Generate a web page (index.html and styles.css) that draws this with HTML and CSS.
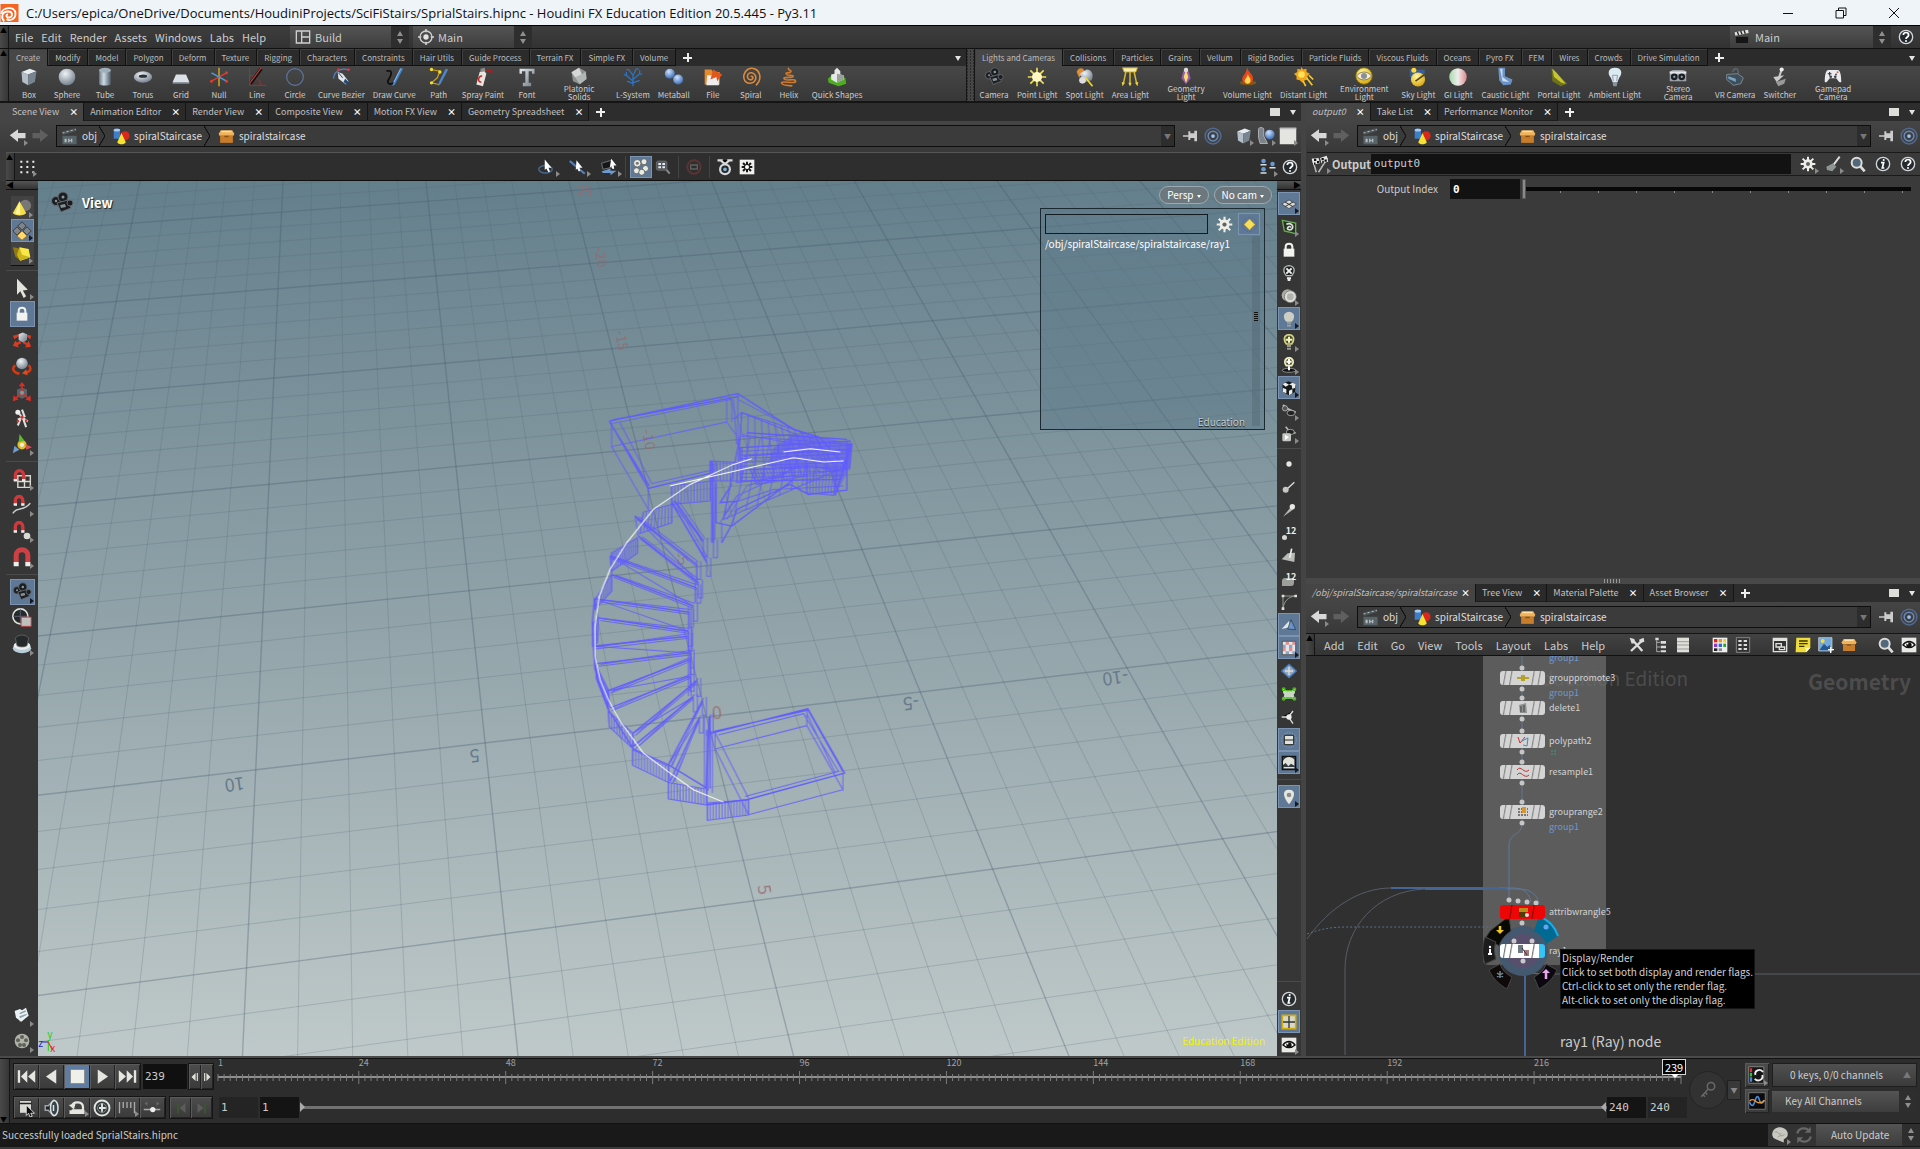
FILE: index.html
```html
<!DOCTYPE html>
<html lang="en">
<head>
    <meta charset="UTF-8">
    <meta name="viewport" content="width=device-width, initial-scale=1.0">
    <title>SprialStairs.hipnc - Houdini FX Education Edition 20.5.445</title>
    <link rel="stylesheet" href="styles.css">
</head>
<body>
    <!-- icon sprite -->
    <svg class="sprite" aria-hidden="true">
        <defs>
            <linearGradient id="steel" x1="0" y1="0" x2="1" y2="1"><stop offset="0" stop-color="#e4eaf0"/><stop offset="1" stop-color="#6d7883"/></linearGradient>
            <linearGradient id="tube" x1="0" y1="0" x2="1" y2="0"><stop offset="0" stop-color="#6f7f8d"/><stop offset=".4" stop-color="#cfdbe4"/><stop offset="1" stop-color="#4d5a66"/></linearGradient>
            <radialGradient id="ball" cx=".4" cy=".3" r=".7"><stop offset="0" stop-color="#eef3f8"/><stop offset="1" stop-color="#77828e"/></radialGradient>
            <radialGradient id="blue" cx=".4" cy=".3" r=".7"><stop offset="0" stop-color="#cfe2ff"/><stop offset="1" stop-color="#3b6db5"/></radialGradient>
            <radialGradient id="gold" cx=".4" cy=".3" r=".7"><stop offset="0" stop-color="#fff9a8"/><stop offset="1" stop-color="#d9a90c"/></radialGradient>
            <linearGradient id="gi" x1="0" y1="0" x2="1" y2="0"><stop offset="0" stop-color="#a8d8a8"/><stop offset=".5" stop-color="#eee"/><stop offset="1" stop-color="#d88"/></linearGradient>
        </defs>
        <symbol id="i-box" viewBox="0 0 24 24"><path fill="#e8edf2" d="M3 6l10-4 8 3-10 4z"/><path fill="#b4bec8" d="M3 6l8 3v13l-7-4z"/><path fill="#78848f" d="M11 9l10-4-2 13-8 4z"/></symbol>
        <symbol id="i-sphere" viewBox="0 0 24 24"><circle cx="12" cy="12" r="10" fill="url(#ball)"/></symbol>
        <symbol id="i-tube" viewBox="0 0 24 24"><path fill="url(#tube)" d="M5 4v16c0 3 14 3 14 0V4z"/><ellipse cx="12" cy="4" rx="7" ry="3" fill="#9fb0bd"/></symbol>
        <symbol id="i-torus" viewBox="0 0 24 24"><ellipse cx="12" cy="12" rx="11" ry="7" fill="url(#ball)"/><ellipse cx="12" cy="11" rx="5" ry="2" fill="#2b3036"/></symbol>
        <symbol id="i-grid" viewBox="0 0 24 24"><path fill="#dbe1e7" d="M6 9h12l4 9H2z"/><path fill="#8d98a3" d="M2 18h20v2H2z"/></symbol>
        <symbol id="i-null" viewBox="0 0 24 24"><path stroke="#e0b21c" stroke-width="1.6" d="M12 1v22"/><path stroke="#e8382a" stroke-width="1.6" d="M3 17L21 7"/><path stroke="#49a0e8" stroke-width="1.6" d="M3 7l18 10"/><circle cx="3" cy="17" r="1.8" fill="#e8382a"/><circle cx="21" cy="7" r="1.8" fill="#e8382a"/><circle cx="21" cy="17" r="1.8" fill="#e8382a"/></symbol>
        <symbol id="i-line" viewBox="0 0 24 24"><path stroke="#a83230" fill="none" d="M3 1v21h20M3 10c6 0 13 5 14 12"/><path stroke="#111" stroke-width="4" d="M4 20L17 2"/><path stroke="#c03a34" stroke-width="1.4" d="M3 20L17 1"/></symbol>
        <symbol id="i-circle" viewBox="0 0 24 24"><circle cx="12" cy="12" r="10" fill="none" stroke="#5d76a4" stroke-width="1.4"/></symbol>
        <symbol id="i-bezier" viewBox="0 0 24 24"><path fill="none" stroke="#4f80c8" stroke-width="1.5" d="M3 14C4 2 16 1 22 4"/><path fill="#dfe6ee" d="M8 6l6 2 7 9-3 4-9-7z"/><path fill="#26496f" d="M17 14l5 5-2 3-5-4z"/><circle cx="9" cy="3" r="1.6" fill="#e33"/><circle cx="21" cy="3" r="1.6" fill="#e33"/><path stroke="#222" d="M9 7l5 6"/></symbol>
        <symbol id="i-draw" viewBox="0 0 24 24"><path fill="none" stroke="#0c0c0c" stroke-width="2" d="M3 5c10-3 4 8 2 11s2 6 6 3"/><path fill="#3f83cc" d="M20 1l3 1-10 19-3 2 1-4z"/><path stroke="#a9cdf0" d="M20 2l-8 16"/></symbol>
        <symbol id="i-path" viewBox="0 0 24 24"><path fill="none" stroke="#c8a019" stroke-width="1.5" d="M2 3l11 2-3 8-7 6 9 2"/><path fill="#4b88cb" d="M20 2l3 1-9 17-3 3 1-5z"/><g fill="#f5dc2c"><circle cx="3" cy="3" r="2"/><circle cx="13" cy="6" r="2"/><circle cx="3" cy="19" r="2"/></g></symbol>
        <symbol id="i-spray" viewBox="0 0 24 24"><path fill="#e8e4e0" d="M8 6l5-2 3 4-4 15-8-2z"/><path fill="#8b8b8b" d="M9 2l5-1 1 4-6 1z"/><path fill="none" stroke="#c22" stroke-width="1.8" d="M11 11c-5-1-6 8-1 7"/><path fill="#a3211e" d="M15 4l8-2v6z"/></symbol>
        <symbol id="i-font" viewBox="0 0 24 24"><path fill="url(#steel)" d="M3 2h18v6h-3V5h-4v14h3v4H7v-4h3V5H6v3H3z"/></symbol>
        <symbol id="i-platonic" viewBox="0 0 24 24"><path fill="#8d9190" d="M12 1l9 5 1 10-9 7-9-4L2 7z"/><path fill="#d4d7d6" d="M12 1l4 9-9 4-5-7z"/><path fill="#b2b6b5" d="M16 10l5-4 1 10-9 7-6-9z"/></symbol>
        <symbol id="i-lsystem" viewBox="0 0 24 24"><path fill="none" stroke="#2f74bd" stroke-width="1.5" d="M12 23V9M12 17L4 10M12 15l8-7M12 10L7 3M12 10l4-8M4 10L1 9M4 10V6M20 8l3 1M20 8V4M12 20l-7-3M12 19l8-3M7 3L4 3M16 2l3 1"/></symbol>
        <symbol id="i-metaball" viewBox="0 0 24 24"><circle cx="7" cy="8" r="6" fill="url(#blue)"/><circle cx="17" cy="15" r="6" fill="url(#blue)"/></symbol>
        <symbol id="i-objmix" viewBox="0 0 24 24"><path fill="#7d8489" stroke="#c2c6c8" d="M2 3c0-3 7-3 7 0v9l5 10H4L2 14z"/><circle cx="17" cy="10" r="6.500" fill="url(#blue)"/></symbol>
        <symbol id="i-file" viewBox="0 0 24 24"><path fill="#e78a2c" d="M2 3h8l2 3h8v15H2z"/><path fill="#eee" d="M5 10h14v12H4z"/><path fill="#e0561c" d="M12 3l11 6-6 8-1-5-7 3z"/></symbol>
        <symbol id="i-spiral" viewBox="0 0 24 24"><path fill="none" stroke="#d98a3a" stroke-width="1.9" d="M12 12c1-2 3 0 2 2s-5 2-6-1 1-7 5-6 6 5 4 9-9 5-12 1-2-11 3-14 12-1 14 5-1 11-4 14"/></symbol>
        <symbol id="i-helix" viewBox="0 0 24 24"><path fill="none" stroke="#cf7a2c" stroke-width="2" d="M12 1c-3 3 4 2 2 5-3 2-7 0-5 3 2 2 8 0 8 2 0 3-12 0-11 3 1 4 14-1 14 3 0 4-17-1-17 2 1 4 12 3 13 4"/></symbol>
        <symbol id="i-quick" viewBox="0 0 24 24"><path fill="#4fae1f" d="M1 14l5-4 16 3 1 7-9 3-12-4z"/><path fill="#e5e8e6" d="M12 1l4 4v4l4 1v5l-8 4-7-4V9l4-1V4z"/><path fill="#999f9b" d="M12 8l8 2v5l-8 4z"/></symbol>
        <symbol id="i-camera" viewBox="0 0 24 24"><g fill="#1b1e21" stroke="#666c72"><circle cx="6" cy="10" r="4.500"/><circle cx="13" cy="6" r="5"/><path d="M7 12l11-3 3 8-10 4z"/><circle cx="20" cy="12" r="3"/></g><circle cx="13" cy="6" r="1.500" fill="#8f979e"/><circle cx="6" cy="10" r="1.200" fill="#8f979e"/><path fill="#878e94" d="M10 14l5-1 1 3-5 1z"/></symbol>
        <symbol id="i-point" viewBox="0 0 24 24"><path stroke="#eedb50" stroke-width="2" d="M12 1v22M1 12h22M4 4l16 16M20 4L4 20"/><circle cx="12" cy="12" r="6" fill="#fff8c4"/></symbol>
        <symbol id="i-spot" viewBox="0 0 24 24"><path fill="#e38a2c" d="M2 6c1-6 9-6 9-1l-6 8z"/><path fill="url(#ball)" d="M5 8l9-5c6 0 9 6 6 13l-8 2z"/><circle cx="9" cy="16" r="4" fill="#ddd"/><path stroke="#f0d829" stroke-width="2" d="M12 12l9 11"/></symbol>
        <symbol id="i-area" viewBox="0 0 24 24"><path fill="#f6edb0" stroke="#c9a51b" d="M3 1h18l-2 5H5z"/><path stroke="#d9b92a" stroke-width="1.800" d="M7 6L4 20M12 6v16M17 6l3 14"/><path fill="#ead23b" d="M2 18l4 1-3 4zM10 19h4l-2 4zM18 19l4-1-1 5z"/></symbol>
        <symbol id="i-geolight" viewBox="0 0 24 24"><path fill="#9b5bb0" d="M12 0l4 7 2 8-6 8-6-8 2-8z"/><path fill="#f5df66" d="M12 4l3 9-3 8-3-8z"/><circle cx="12" cy="4" r="3" fill="#ddd"/></symbol>
        <symbol id="i-volume" viewBox="0 0 24 24"><ellipse cx="12" cy="19" rx="10" ry="3" fill="#7a5a1b"/><path fill="#e8481a" d="M11 0c0 6 8 8 7 15-1 7-12 7-13 0C5 10 10 9 11 0z"/><path fill="#ffd84c" d="M12 8c0 4 4 5 3 9-1 4-6 4-7 0 0-3 3-4 4-9z"/></symbol>
        <symbol id="i-distant" viewBox="0 0 24 24"><path fill="#f0a61c" d="M9 0l2 3 4-1v4l4 2-3 3 1 4-4 1-3 3-3-3-4-1V11L0 8l4-2V2l4 1z"/><circle cx="9" cy="9" r="4" fill="#ffe157"/><path stroke="#f4c92a" stroke-width="2" d="M15 13l7 9M11 17l3 6M18 10l5 5"/></symbol>
        <symbol id="i-env" viewBox="0 0 24 24"><circle cx="12" cy="12" r="11" fill="url(#gold)" stroke="#877000"/><path fill="#f3eedc" stroke="#6d6228" d="M2 12c5-7 15-7 20 0-5 7-15 7-20 0z"/><circle cx="12" cy="12" r="4" fill="#8a8f93"/></symbol>
        <symbol id="i-sky" viewBox="0 0 24 24"><path fill="#3a5f94" d="M2 3h18v9H2z"/><circle cx="12" cy="15" r="8.500" fill="url(#gold)"/><circle cx="7" cy="4" r="3" fill="#ffd93b"/><path stroke="#60480a" stroke-width="2" d="M9 17l11-8"/></symbol>
        <symbol id="i-gi" viewBox="0 0 24 24"><circle cx="12" cy="12" r="10.500" fill="url(#gi)"/></symbol>
        <symbol id="i-caustic" viewBox="0 0 24 24"><path fill="#6a93c9" d="M4 1h8v10l9 4-2 6-9 1-5-6z"/><path fill="#cbdcf0" d="M6 2h3v10l8 6-8-1z"/></symbol>
        <symbol id="i-portal" viewBox="0 0 24 24"><path fill="#6e721c" d="M3 1l6 6 13 13-8 3L4 17z"/><path fill="#c7c531" d="M4 2l5 5 11 13-5-1L6 12z"/></symbol>
        <symbol id="i-ambient" viewBox="0 0 24 24"><path fill="#dbeaf0" d="M12 1c9 0 9 8 5 12l-2 5H9l-2-5C3 9 3 1 12 1z"/><path fill="#86949b" d="M9 18h6l-1 5h-4z"/><path fill="none" stroke="#88a" d="M10 17l-1-7h6l-1 7"/></symbol>
        <symbol id="i-stereo" viewBox="0 0 24 24"><path fill="#9da2a8" d="M1 6l4-2h14l4 2v13H1z"/><path fill="#e4e7ea" d="M1 6h22v3H1z"/><circle cx="7" cy="13" r="4.500" fill="#1b1e22"/><circle cx="17" cy="13" r="4.500" fill="#1b1e22"/><circle cx="7" cy="13" r="1.500" fill="#8ab"/><circle cx="17" cy="13" r="1.500" fill="#8ab"/></symbol>
        <symbol id="i-vr" viewBox="0 0 24 24"><path fill="none" stroke="#59636b" stroke-width="2" d="M9 6c3-6 7-5 7 2"/><path fill="#3e4f5c" stroke="#86939d" d="M2 9l13-1 7 5-3 7-9 2-8-7z"/><path fill="#7ba3bd" d="M4 11l9 3v4l-9-4z"/></symbol>
        <symbol id="i-switcher" viewBox="0 0 24 24"><path stroke="#c9c9c9" stroke-width="2.500" d="M14 3l-4 12"/><circle cx="14" cy="3" r="2.500" fill="#eee"/><path fill="#cbcbcb" d="M4 12l13-2-9 8z"/><path fill="#999" d="M7 18l12-4-2 6-7 3z"/></symbol>
        <symbol id="i-gamepad" viewBox="0 0 24 24"><path fill="#e9ebee" d="M6 4h12c4 0 5 8 5 16-3 2-5-4-7-5H8c-2 1-4 7-7 5C1 12 2 4 6 4z"/><path stroke="#333" stroke-width="1.500" d="M5 9h5M7.500 6.500v5"/><circle cx="18" cy="7" r="1.300" fill="#d64"/><circle cx="16" cy="10" r="1.300" fill="#456"/><circle cx="9" cy="13" r="1.800" fill="#444"/><circle cx="15" cy="13" r="1.800" fill="#444"/></symbol>

        <symbol id="i-houdini" viewBox="0 0 24 24"><path fill="#f26722" d="M0 0h24v24H0z"/><path fill="none" stroke="#fff" stroke-width="2.400" d="M1 13C2 4 20 2 20 13c0 8-9 10-12 7M5 23c-5-5-3-13 5-13 7 0 7 8 1 8-4 0-4-4-1-4"/></symbol>
        <symbol id="i-layout" viewBox="0 0 24 24"><path fill="none" stroke="#cfcfcf" stroke-width="2" d="M2 3h20v18H2zM10 3v18M10 12h12"/></symbol>
        <symbol id="i-radial" viewBox="0 0 24 24"><circle cx="12" cy="12" r="9" fill="none" stroke="#cfcfcf" stroke-width="2"/><circle cx="12" cy="12" r="4" fill="#e4e4e4"/><path stroke="#cfcfcf" stroke-width="2.500" d="M12 0v5M12 19v5M0 12h5M19 12h5"/></symbol>
        <symbol id="i-clap" viewBox="0 0 24 24"><path fill="#e2e2e2" d="M1 5l20-4 1 5L2 10z"/><path stroke="#222" stroke-width="2" d="M5 4l2 5M10 3l2 5M15 2l2 5"/><path fill="#151515" stroke="#555" d="M2 11h20v11H2z"/></symbol>
        <symbol id="i-obj" viewBox="0 0 24 24"><path fill="#56646a" d="M2 11h20v12H2z"/><path fill="#4f5659" d="M2 5l19-5 1 4L3 10z"/><path stroke="#a8b2b6" stroke-width="1.500" stroke-dasharray="3 3" d="M2 7l19-5"/><path fill="#b4bcbe" d="M5 15h3v5H5zM10 15h2v2h2v-2h2v5h-2v-2h-2v2h-2z"/></symbol>
        <symbol id="i-shapes" viewBox="0 0 24 24"><path fill="#3d7dcc" d="M1 3c0-3 9-3 9 0v12H1z"/><ellipse cx="5.500" cy="3" rx="4.500" ry="2" fill="#a9cbf0"/><circle cx="17" cy="11" r="6.500" fill="#d8281e"/><path fill="#f6e230" d="M12 7l6 13c-2 4-10 4-12 0z"/></symbol>
        <symbol id="i-crate" viewBox="0 0 24 24"><path fill="#f0b35b" d="M4 3h16l3 5-1 3H2L1 8z"/><path fill="#c87d2a" d="M3 11h18v10H3z"/><path fill="#ffe0a2" d="M5 4h14v2H5z"/><path fill="#8a5115" d="M9 11h6v2H9z"/></symbol>
        <symbol id="i-back" viewBox="0 0 24 24"><path fill="currentColor" d="M1 11L12 3v5h10v7H12v5z"/></symbol>
        <symbol id="i-fwd" viewBox="0 0 24 24"><path fill="currentColor" d="M23 11L12 3v5H2v7h10v5z"/></symbol>
        <symbol id="i-pin" viewBox="0 0 24 24"><path fill="#ccc" d="M0 11h8V5h3v3h6V4h4v16h-4v-5h-6v3H8v-5H0z"/></symbol>
        <symbol id="i-target" viewBox="0 0 24 24"><circle cx="12" cy="12" r="10.500" fill="none" stroke="#50698e" stroke-width="2"/><circle cx="12" cy="12" r="6.500" fill="none" stroke="#6788b8" stroke-width="2"/><circle cx="12" cy="12" r="2.500" fill="#9bc1f4"/></symbol>
        <symbol id="i-help" viewBox="0 0 24 24"><circle cx="12" cy="12" r="10" fill="#242a2e" stroke="#d5d8da" stroke-width="2"/><path fill="none" stroke="#fff" stroke-width="2.600" d="M8 9c0-5 8-5 8 0 0 3-4 3-4 6"/><circle cx="12" cy="18" r="1.500" fill="#fff"/></symbol>
        <symbol id="i-info" viewBox="0 0 24 24"><circle cx="12" cy="12" r="10" fill="#242a2e" stroke="#d5d8da" stroke-width="2"/><path stroke="#fff" stroke-width="2.600" fill="none" d="M9 10h4l-2 8h3"/><circle cx="13" cy="6" r="1.600" fill="#fff"/></symbol>
        <symbol id="i-maxi" viewBox="0 0 24 24"><path fill="#e4e4e0" d="M1 1h22v22H1z"/><path fill="#bbb" d="M1 1h22v2H1z"/></symbol>
        <symbol id="i-dots" viewBox="0 0 24 24"><path stroke="#eee" stroke-width="3" stroke-dasharray="3 6" d="M2 4h21M2 12h21M2 20h21"/></symbol>
        <symbol id="i-sel1" viewBox="0 0 24 24"><ellipse cx="10" cy="15" rx="9" ry="5" fill="none" stroke="#47688f" stroke-width="2"/><path fill="#fff" d="M9 2l9 11h-4l2 5-2 1-3-5-2 2z"/></symbol>
        <symbol id="i-sel2" viewBox="0 0 24 24"><path stroke="#5581b8" stroke-width="3" d="M1 4l20 17"/><path fill="#fff" d="M10 3l8 10h-4l1 4-2 1-2-4-2 2z"/></symbol>
        <symbol id="i-sel3" viewBox="0 0 24 24"><path fill="#14171a" stroke="#888" d="M2 7l13-4 3 9-14 3z"/><path fill="#6d9ad0" d="M2 18l12-4v3h8l-8 6v-3H4z"/><path fill="#fff" d="M15 1l7 9h-4l1 4-2 1-2-4-2 2z"/></symbol>
        <symbol id="i-people" viewBox="0 0 24 24"><g fill="#e8ebe4" stroke="#555"><circle cx="7" cy="7" r="5"/><circle cx="16" cy="5" r="4"/><circle cx="6" cy="17" r="4"/><circle cx="18" cy="14" r="4"/><circle cx="13" cy="19" r="4"/></g><circle cx="7" cy="7" r="2" fill="#777"/></symbol>
        <symbol id="i-viewzoom" viewBox="0 0 24 24"><rect x="2" y="3" width="16" height="14" rx="3" fill="#55595d" stroke="#777"/><path fill="#e4ebf2" d="M5 6h4v3H5zM11 6h4v3h-4zM5 11h4v3H5zM11 11h4v3h-4z"/><path stroke="#888" stroke-width="3" d="M17 16l5 6"/></symbol>
        <symbol id="i-stopc" viewBox="0 0 24 24"><circle cx="12" cy="12" r="10" fill="none" stroke="#5a3434" stroke-width="3"/><path fill="none" stroke="#606060" stroke-width="2" d="M7 9h10v6H7z"/></symbol>
        <symbol id="i-snap" viewBox="0 0 24 24"><path stroke="#ddd" stroke-width="3" d="M2 3h7M15 3h7M6 3l6 5 6-5"/><circle cx="12" cy="15" r="8" fill="#d3d6d8"/><circle cx="12" cy="15" r="5" fill="#20262a"/><circle cx="12" cy="15" r="2.500" fill="#7fb0d0"/></symbol>
        <symbol id="i-gearbox" viewBox="0 0 24 24"><path fill="#f0f0ee" d="M1 1h22v22H1z"/><path stroke="#171717" stroke-width="3" d="M12 4v16M4 12h16M6 6l12 12M18 6L6 18"/><circle cx="12" cy="12" r="3" fill="#fff"/></symbol>
        <symbol id="i-gear" viewBox="0 0 24 24"><path stroke="#eeeee6" stroke-width="3" d="M12 1v22M1 12h22M4 4l16 16M20 4L4 20"/><circle cx="12" cy="12" r="7" fill="#eeeee6"/><circle cx="12" cy="12" r="3" fill="#5a6467"/></symbol>
        <symbol id="i-tree3" viewBox="0 0 24 24"><g fill="#6b9ad2"><circle cx="6" cy="4" r="3"/><circle cx="6" cy="15" r="3"/><circle cx="18" cy="8" r="3"/></g><path stroke="#ddd" stroke-width="2" d="M2 9h8M2 20h8M14 13h8"/></symbol>
        <symbol id="i-flag" viewBox="0 0 24 24"><path stroke="#bbb" stroke-width="2" d="M2 5l5 18M22 4L10 23"/><path fill="#e6e6e6" d="M1 5l9-1 2 7-9 2zM12 4l9-3 2 8-9 2z"/><path fill="#111" d="M4 5h3v3H4zM8 8h3v3H8zM4 10h2v3H4zM14 4h3v3h-3zM18 6h3v3h-3zM15 8h2v3h-2z"/></symbol>
        <symbol id="i-brush" viewBox="0 0 24 24"><path stroke="#ddd" stroke-width="3" d="M22 1l-9 12"/><path fill="#8f9591" d="M2 16l10-5 5 5-6 7-8-2z"/></symbol>
        <symbol id="i-search" viewBox="0 0 24 24"><circle cx="10" cy="10" r="7.500" fill="#53687a" stroke="#dcdcdc" stroke-width="3"/><path stroke="#dcdcdc" stroke-width="4" d="M15 15l7 8"/></symbol>

        <symbol id="i-cone" viewBox="0 0 24 24"><circle cx="16" cy="9" r="7" fill="#777"/><path fill="#f5df45" d="M9 4l8 14c-2 4-14 4-16 0z"/><path fill="#fff5a5" d="M9 4l1 16-6-1z"/></symbol>
        <symbol id="i-diamonds" viewBox="0 0 24 24"><path fill="#7e8488" stroke="#333" d="M12 1l5 5-5 5-5-5zM6 7l5 5-5 5-5-5zM18 7l5 5-5 5-5-5z"/><path fill="#ffd870" stroke="#a06a12" d="M12 12l6 6-6 5-6-5z"/></symbol>
        <symbol id="i-gcube" viewBox="0 0 24 24"><path fill="#8f7b0e" d="M1 4l7 1 2 15-6-5z"/><path fill="#f8e747" d="M9 4l11 2 2 10-12 4-3-6z"/><path fill="#cdb41a" d="M9 4l3 9-2 7-4-7zM12 13l10 3-12 4z"/></symbol>
        <symbol id="i-arrow" viewBox="0 0 24 24"><path fill="#e3e3dd" d="M6 1l13 13-6 1 4 7-3 2-4-8-4 4z"/></symbol>
        <symbol id="i-lock" viewBox="0 0 24 24"><path fill="none" stroke="#f2f2ee" stroke-width="3" d="M7 12V7c0-6 10-6 10 0v5"/><path fill="#f2f2ee" d="M4 10h16v12H4z"/></symbol>
        <symbol id="i-move" viewBox="0 0 24 24"><path fill="#d83b24" d="M3 11l6-4-1-2-7 2zM22 11l-6-4 1-2 6 2zM1 19l3-6 2 2 4-2 1 3-4 2 1 3zM23 20l-3-7-2 3-4-3-1 3 4 2-1 3z"/><path fill="url(#steel)" d="M8 5l5-2 5 2v7l-5 3-5-3z"/></symbol>
        <symbol id="i-rotate" viewBox="0 0 24 24"><path fill="none" stroke="#cf3a16" stroke-width="3" d="M4 11c-6 5 0 10 5 10M20 11c4 4 2 8-4 9"/><circle cx="12" cy="9" r="7" fill="url(#ball)"/><path fill="#e4481c" d="M17 16l-5 5 7 2z"/></symbol>
        <symbol id="i-scale" viewBox="0 0 24 24"><path fill="#5b6267" d="M6 9l6-2 6 2v8l-6 3-6-3z"/><path fill="none" stroke="#c9322c" stroke-width="2" d="M12 4v9L4 20M12 13l8 7"/><path fill="#d62f28" d="M8 5l4-5 4 5zM1 23l1-7 6 5zM23 23l-1-7-6 5z"/><circle cx="12" cy="13" r="2.500" fill="#8c9499"/></symbol>
        <symbol id="i-pose" viewBox="0 0 24 24"><path fill="none" stroke="#ddd" stroke-width="2.500" d="M12 2l3 8-8 4M7 5l6 7 6 4M11 11l-4 10M13 12l4 11"/><g fill="#d5302a"><circle cx="12" cy="11" r="2"/><circle cx="7" cy="16" r="1.500"/><circle cx="17" cy="15" r="1.500"/></g><circle cx="7" cy="5" r="3" fill="#eee"/></symbol>
        <symbol id="i-handles" viewBox="0 0 24 24"><circle cx="12" cy="13" r="5.500" fill="#ddc12b"/><circle cx="12" cy="13" r="2.500" fill="#eee"/><path fill="#5fb82b" d="M9 0l6 8-7 2z"/><path fill="#dd4b50" d="M24 16l-8-4 1 7z"/><path fill="#6f9bd0" d="M1 23l2-9 6 5z"/></symbol>
        <symbol id="i-maggrid" viewBox="0 0 24 24"><path fill="none" stroke="#d8d8cc" stroke-width="1.700" d="M7 8h15v14H7zM7 15h15M15 8v14"/><path fill="none" stroke="#ce3a3c" stroke-width="4" d="M4 13V8c0-8 10-8 10 0v5"/><path stroke="#eee" stroke-width="4" d="M4 12v3M14 12v3"/></symbol>
        <symbol id="i-magcurve" viewBox="0 0 24 24"><path fill="none" stroke="#ccc" stroke-width="1.800" d="M1 22c6-9 11-1 21-12"/><path fill="none" stroke="#ce3a3c" stroke-width="4" d="M4 11V7c0-7 9-7 9 0v4"/><path stroke="#eee" stroke-width="4" d="M4 10v3M13 10v3"/></symbol>
        <symbol id="i-magpoint" viewBox="0 0 24 24"><circle cx="18" cy="18" r="4" fill="#d9dad2"/><path fill="none" stroke="#ce3a3c" stroke-width="4" d="M4 12V7c0-7 9-7 9 0v5"/><path stroke="#eee" stroke-width="4" d="M4 11v3M13 11v3"/></symbol>
        <symbol id="i-magnet" viewBox="0 0 24 24"><path fill="none" stroke="#cf4044" stroke-width="6" d="M5 19V10c0-9 14-9 14 0v9"/><path stroke="#eee" stroke-width="6" d="M5 18v5M19 18v5"/></symbol>
        <symbol id="i-region" viewBox="0 0 24 24"><circle cx="10" cy="10" r="9" fill="#222a2b" stroke="#e0e2dc" stroke-width="2"/><path stroke="#667" d="M1 10h18M10 1v18"/><path fill="#bfc1bf" stroke="#c43f42" d="M11 11h12v11H11z"/></symbol>
        <symbol id="i-stand" viewBox="0 0 24 24"><ellipse cx="12" cy="17" rx="11" ry="6" fill="#b9ced8"/><ellipse cx="12" cy="14" rx="10" ry="5" fill="#e9eef0"/><path fill="#26292b" stroke="#666" d="M4 5c3-5 13-5 16 0l-2 9c-3 2-9 2-12 0z"/></symbol>
        <symbol id="i-cards" viewBox="0 0 24 24"><path fill="#b96548" d="M3 10l15 4-9 9z"/><path fill="#eaf2f6" d="M1 6l8-3 3 2 6-4 4 12-11 9-8-6z"/><path fill="#8f9fa8" d="M8 9l9-4 1 2-9 4zM8 14l11-4v2l-10 5z"/></symbol>
        <symbol id="i-reel" viewBox="0 0 24 24"><circle cx="12" cy="12" r="11" fill="#b1b3ab"/><g fill="#5f6259"><circle cx="12" cy="6" r="3"/><circle cx="6" cy="11" r="3"/><circle cx="18" cy="11" r="3"/><circle cx="9" cy="18" r="3"/><circle cx="15" cy="18" r="3"/></g></symbol>

        <symbol id="i-plane" viewBox="0 0 24 24"><path fill="#d9dcd8" stroke="#333" d="M12 6l11 6-11 7L1 12z"/><path stroke="#333" stroke-width="1.500" d="M6 9l12 7M18 9L6 16"/></symbol>
        <symbol id="i-ghost" viewBox="0 0 24 24"><path fill="#23331f" stroke="#6dac56" stroke-width="2" d="M2 2l20 4v16L5 18z"/><path fill="none" stroke="#ddd" stroke-width="2.500" d="M8 8c7-3 11 2 9 6s-9 2-7-1 5-1 4 0"/></symbol>
        <symbol id="i-bulbx" viewBox="0 0 24 24"><path fill="#1c1f20" stroke="#b6bab8" stroke-width="2" d="M12 1c10 1 9 10 4 15H8C3 11 2 2 12 1z"/><path stroke="#eee" stroke-width="3" d="M8 5l8 8M16 5l-8 8M9 20h6M10 23h4"/></symbol>
        <symbol id="i-disc" viewBox="0 0 24 24"><circle cx="10" cy="11" r="9" fill="#a9aca5"/><circle cx="14" cy="13" r="9" fill="#dadcd4" stroke="#666"/><circle cx="14" cy="13" r="5" fill="#b0b3ad"/></symbol>
        <symbol id="i-bulb" viewBox="0 0 24 24"><path fill="#cdcdc4" d="M12 1c10 1 9 10 4 15H8C3 11 2 2 12 1z"/><path stroke="#a4a49d" stroke-width="2.500" d="M9 18h6M9 22h6"/></symbol>
        <symbol id="i-bulbplus" viewBox="0 0 24 24"><path fill="#4b4b27" stroke="#d3d187" stroke-width="2.500" d="M12 1c9 1 8 9 4 14H8C4 10 3 2 12 1z"/><path stroke="#f5f5c0" stroke-width="3" d="M12 4v9M7 8.500h10"/><path stroke="#99998c" stroke-width="3" d="M9 18h6M9 22h6"/></symbol>
        <symbol id="i-bulbbase" viewBox="0 0 24 24"><ellipse cx="12" cy="20" rx="10" ry="3" fill="#111" stroke="#bbb"/><path fill="#55552f" stroke="#f0efc0" stroke-width="2.500" d="M12 1c8 1 7 9 4 12H8C5 10 4 2 12 1z"/><path stroke="#fff" stroke-width="3" d="M12 3v8M8 7h8M12 14v6"/></symbol>
        <symbol id="i-checkcube" viewBox="0 0 24 24"><path fill="#15181a" d="M2 6l9-4 11 4-1 12-9 5-9-5z"/><path fill="#ecece6" d="M2 6l5-2 5 3-5 3zM12 7l5-3 5 2-1 6-4 1-1-5zM3 12l5 2v6l-5-2zM12 16l5-2v6l-5 3z"/></symbol>
        <symbol id="i-glasses" viewBox="0 0 24 24"><path fill="none" stroke="#b7bab8" stroke-width="3" d="M3 3l7 6 12 5"/><ellipse cx="6" cy="8" rx="4" ry="4" fill="#555" stroke="#ccc"/><ellipse cx="15" cy="15" rx="6" ry="4" fill="#222" stroke="#ccc"/></symbol>
        <symbol id="i-glasses2" viewBox="0 0 24 24"><path fill="none" stroke="#b7bab8" stroke-width="2.500" d="M7 1l5 6 10 4"/><ellipse cx="14" cy="9" rx="6" ry="4" fill="#222" stroke="#ccc"/><rect x="2" y="11" width="13" height="12" rx="2" fill="#c4c6c2"/><path fill="#fff" d="M6 13l6 4-6 4z"/></symbol>
        <symbol id="i-dot" viewBox="0 0 24 24"><circle cx="12" cy="12" r="4" fill="#e6e7df"/></symbol>
        <symbol id="i-norm" viewBox="0 0 24 24"><path stroke="#ddd" stroke-width="2" d="M7 17L20 5"/><circle cx="7" cy="16" r="4.500" fill="#c5c7c0"/></symbol>
        <symbol id="i-norm2" viewBox="0 0 24 24"><path fill="#b6b8b1" d="M16 6l4 4L3 22z"/><circle cx="17" cy="7" r="4" fill="#e8e9e2"/></symbol>
        <symbol id="i-prim" viewBox="0 0 24 24"><path fill="#b9bbb6" d="M1 17L10 8l11-1-1 14z"/><path stroke="#eee" stroke-width="2.500" d="M13 15l3-14"/></symbol>
        <symbol id="i-curvec" viewBox="0 0 24 24"><path fill="none" stroke="#8f9c8e" stroke-width="1.500" d="M3 22V3h19M3 22C4 12 10 4 22 3"/><path fill="#ddd" d="M1 1h4v4H1zM20 1h4v4h-4zM1 20h4v4H1z"/></symbol>
        <symbol id="i-facet" viewBox="0 0 24 24"><path fill="#dfe6ea" d="M1 18L12 6l3 9z"/><path fill="#6993c9" stroke="#234" d="M15 4l7 15-12-1z"/></symbol>
        <symbol id="i-uv" viewBox="0 0 24 24"><path fill="#e6e6e6" stroke="#333" d="M2 2h20v20H2z"/><path fill="#dd8f8f" d="M7 3h5v4H7zM17 3h4v4h-4zM3 12h4v5H3zM12 12h5v5h-5z"/><path fill="#86a5d2" d="M3 7h4v5H3zM12 7h5v5h-5zM7 17h5v4H7zM17 17h4v4h-4z"/></symbol>
        <symbol id="i-bdiamond" viewBox="0 0 24 24"><path fill="#91a7bc" stroke="#3f76bd" stroke-width="2" d="M12 2l11 10-11 10L1 12z"/><path stroke="#ddd" stroke-width="2" d="M12 6v12M6 12h12"/></symbol>
        <symbol id="i-clover" viewBox="0 0 24 24"><path fill="#c8d6c2" d="M3 4l6 3h6l6-3v6l-2 3 2 7-6-1H9l-6 1 2-7-2-3z"/><g fill="none" stroke="#4eb81f" stroke-width="2"><circle cx="4" cy="5" r="2"/><circle cx="20" cy="5" r="2"/><circle cx="4" cy="19" r="2"/><circle cx="20" cy="19" r="2"/><path d="M7 7h10M7 18h10"/></g></symbol>
        <symbol id="i-tri" viewBox="0 0 24 24"><path stroke="#ddd" stroke-width="2" d="M1 12h10l7-9M12 13l6 9"/><circle cx="12" cy="12" r="4" fill="#eee"/></symbol>
        <symbol id="i-stencil" viewBox="0 0 24 24"><circle cx="12" cy="12" r="11" fill="none" stroke="#9fb2c6" stroke-dasharray="2 2"/><path fill="#e2e3dc" stroke="#222" stroke-width="1.500" d="M5 5h14v14H5zM5 12h14"/></symbol>
        <symbol id="i-photo" viewBox="0 0 24 24"><path fill="#333a3e" stroke="#111" stroke-width="2" d="M2 2h20v20H2z"/><path fill="#dfe1da" d="M3 9c4-8 13-7 17-2v9l-5-3-4 4-4-5-4 3z"/><path fill="#dfe1da" d="M4 18h16v2H4z"/></symbol>
        <symbol id="i-marker" viewBox="0 0 24 24"><path fill="#e5e6e0" d="M12 1c11 0 9 11 0 22C3 12 1 1 12 1z"/><circle cx="12" cy="9" r="3.500" fill="#8a8c88"/></symbol>
        <symbol id="i-quad" viewBox="0 0 24 24"><path fill="#d8d8c8" stroke="#d4ac0d" stroke-width="2.500" d="M2 2h20v20H2z"/><path stroke="#333" stroke-width="2" d="M12 3v18M3 12h18"/></symbol>
        <symbol id="i-eye" viewBox="0 0 24 24"><path fill="#e8e9e4" d="M1 1h22v22H1z"/><path fill="#fff" stroke="#111" stroke-width="2" d="M3 12c5-7 13-7 18 0-5 5-13 5-18 0z"/><circle cx="12" cy="12" r="4" fill="#111"/><circle cx="10" cy="10" r="1.200" fill="#fff"/></symbol>

        <symbol id="i-wrench" viewBox="0 0 24 24"><path stroke="#ddd" stroke-width="3.500" d="M3 21L20 5M5 4l15 17"/><path fill="#ddd" d="M1 1l7 2 1 6-5 1zM22 1l-7 3 2 5 6-2z"/></symbol>
        <symbol id="i-list" viewBox="0 0 24 24"><path fill="#ddd" d="M5 1h5v4H5zM13 6h8v4h-8zM13 13h8v4h-8zM13 20h8v3h-8z"/><path fill="none" stroke="#aaa" stroke-width="1.500" d="M7 5v17h5M7 8h5M7 15h5"/></symbol>
        <symbol id="i-rows" viewBox="0 0 24 24"><path fill="#e0e0da" d="M3 1h18v22H3z"/><path stroke="#777" d="M3 7h18M3 12h18M3 18h18"/></symbol>
        <symbol id="i-palette" viewBox="0 0 24 24"><path fill="#eee" d="M1 1h22v22H1z"/><path fill="#d22" d="M3 3h5v5H3z"/><path fill="#e59a1e" d="M10 3h5v5h-5z"/><path fill="#e7d71c" d="M17 3h4v5h-4z"/><path fill="#22a53b" d="M17 10h4v5h-4z"/><path fill="#2a6bd8" d="M10 10h5v5h-5z"/><path fill="#8b3bc4" d="M3 10h5v5H3z"/><path fill="#222" d="M3 17h5v4H3z"/><path fill="#888" d="M10 17h5v4h-5z"/></symbol>
        <symbol id="i-nodes" viewBox="0 0 24 24"><path fill="#333" stroke="#aaa" d="M2 1h20v22H2z"/><path stroke="#ddd" stroke-width="3" stroke-dasharray="5 3" d="M5 6h14M5 12h14M5 18h14"/></symbol>
        <symbol id="i-netbox" viewBox="0 0 24 24"><path fill="#333" stroke="#e2e2dc" stroke-width="2" d="M2 2h20v20H2z"/><path fill="#e2e2dc" d="M2 2h20v4H2z"/><path fill="none" stroke="#e2e2dc" stroke-width="2" d="M6 10h8v5H6zM11 15h8v4h-8z"/></symbol>
        <symbol id="i-note" viewBox="0 0 24 24"><path fill="#f1dc3e" d="M2 1h21v15l-6 7H1z"/><path stroke="#3a3508" stroke-width="2" d="M6 6h13M6 10h13M6 14h8"/><path fill="#fff8a0" d="M15 16h8l-6 7z"/></symbol>
        <symbol id="i-image" viewBox="0 0 24 24"><path fill="#74a9dd" stroke="#ddd" d="M1 1h20v20H1z"/><path fill="#28588f" d="M2 20l7-10 5 5 3-3 4 8z"/><circle cx="7" cy="6" r="3" fill="#f4db3a"/><path stroke="#fff" stroke-width="2" d="M19 15v9M15 19h9"/></symbol>

        <symbol id="i-first" viewBox="0 0 24 24"><path fill="#e6e6e0" d="M1 4h3v16H1zM13 4v16l-8-8zM23 4v16l-9-8z"/></symbol>
        <symbol id="i-last" viewBox="0 0 24 24"><path fill="#e6e6e0" d="M23 4h-3v16h3zM11 4v16l8-8zM1 4v16l9-8z"/></symbol>
        <symbol id="i-rev" viewBox="0 0 24 24"><path fill="#e6e6e0" d="M18 3v18L5 12z"/></symbol>
        <symbol id="i-play" viewBox="0 0 24 24"><path fill="#e6e6e0" d="M6 3v18l13-9z"/></symbol>
        <symbol id="i-stop" viewBox="0 0 24 24"><path fill="#f0f0ea" stroke="#777" d="M3 3h18v18H3z"/></symbol>
        <symbol id="i-stepb" viewBox="0 0 12 24"><path fill="#e0e0da" d="M7 5v14L0 12zM9 5h2v14H9z"/></symbol>
        <symbol id="i-stepf" viewBox="0 0 12 24"><path fill="#e0e0da" d="M5 5v14l7-7zM1 5h2v14H1z"/></symbol>
        <symbol id="i-panelcur" viewBox="0 0 24 24"><path fill="#d8d9d3" stroke="#222" d="M2 2h16v17H2z"/><path stroke="#222" stroke-width="2" d="M2 6h16"/><path fill="#111" stroke="#fff" d="M11 8l11 11h-5l2 4-3 1-2-5-3 3z"/></symbol>
        <symbol id="i-speaker" viewBox="0 0 24 24"><path fill="#1c2226" stroke="#9ba4a9" stroke-width="2" d="M3 9h4l7-7v20l-7-7H3z"/><ellipse cx="15" cy="12" rx="5" ry="10" fill="#36434a" stroke="#dfe3e4" stroke-width="2"/><path stroke="#dfe3e4" stroke-width="2" d="M14 8v8"/></symbol>
        <symbol id="i-loop" viewBox="0 0 24 24"><path fill="none" stroke="#e6e6e0" stroke-width="3" d="M5 10c2-8 15-7 15 1v4H5"/><path fill="#e6e6e0" d="M1 8l9-2-2 8zM2 15h20v5H2z"/></symbol>
        <symbol id="i-clock" viewBox="0 0 24 24"><circle cx="12" cy="12" r="10" fill="#333c40" stroke="#e6e6e0" stroke-width="2.500"/><circle cx="12" cy="12" r="6" fill="none" stroke="#9ea19f"/><path stroke="#e6e6e0" stroke-width="2.500" d="M12 6v11M8 12h9"/></symbol>
        <symbol id="i-ticks" viewBox="0 0 24 24"><path stroke="#aaa" stroke-width="1.800" d="M2 4v15M7 4v8M12 4v8M17 4v8M22 4v15"/></symbol>
        <symbol id="i-slide" viewBox="0 0 24 24"><path stroke="#aaa" stroke-width="2" d="M1 14h22"/><circle cx="13" cy="14" r="3.500" fill="#eee"/><path fill="#666" d="M6 3v6L2 6zM18 3v6l4-3z"/></symbol>
        <symbol id="i-keyprev" viewBox="0 0 24 24"><path fill="#3c5434" d="M4 2h4v20H4z"/><path fill="#5b5b5b" d="M21 2v20L9 12z"/></symbol>
        <symbol id="i-keynext" viewBox="0 0 24 24"><path fill="#3c5434" d="M16 2h4v20h-4z"/><path fill="#5b5b5b" d="M3 2v20l12-10z"/></symbol>
        <symbol id="i-key" viewBox="0 0 24 24"><g fill="none" stroke="#696969" stroke-width="2"><circle cx="16" cy="7" r="5"/><path d="M12 11L3 21M5 18l3 3M8 15l3 3"/></g></symbol>
        <symbol id="i-chan" viewBox="0 0 24 24"><path fill="#151515" stroke="#999" d="M1 1h20v22H1z"/><path stroke="#d33" stroke-width="3" d="M4 3v5"/><path stroke="#3b3" stroke-width="3" d="M4 9v5"/><path stroke="#48d" stroke-width="3" d="M4 15v6"/><path fill="none" stroke="#eee" stroke-width="2.500" d="M20 8c-4-6-12-1-10 4M9 17c4 5 12 1 10-5"/></symbol>
        <symbol id="i-graph" viewBox="0 0 24 24"><path fill="#0b0b0d" stroke="#888" d="M1 1h22v22H1z"/><path fill="none" stroke="#4f8fe0" stroke-width="2" d="M2 13c2 6 5 7 7 0s4-10 6-3 4 6 7 1"/><path fill="none" stroke="#e59635" stroke-width="2" d="M2 12c5-4 6-1 9 1s7 2 11-2"/></symbol>
        <symbol id="i-brain" viewBox="0 0 24 24"><path fill="#c9c9c1" d="M2 9c1-6 9-9 15-6 5 2 7 8 4 12l-4 3v4l-5-2-7-3C2 15 1 12 2 9z"/><path fill="none" stroke="#8a8a84" d="M5 8c5-2 4 5 9 2M9 15c3-4 6 0 9-4"/></symbol>
        <symbol id="i-refresh" viewBox="0 0 24 24"><path fill="none" stroke="#686868" stroke-width="3" d="M3 10c2-8 12-9 16-3M21 14c-2 8-12 9-16 3"/><path fill="#686868" d="M21 1v8h-8zM3 23v-8h8z"/></symbol>
    </svg>

    <header class="titlebar">
        <svg class="logo"><use href="#i-houdini"/></svg>
        <span class="title">C:/Users/epica/OneDrive/Documents/HoudiniProjects/SciFiStairs/SprialStairs.hipnc - Houdini FX Education Edition 20.5.445 - Py3.11</span>
        <div class="window-buttons">
            <button aria-label="Minimize"><svg viewBox="0 0 12 12"><path d="M1 6.500h10"/></svg></button>
            <button aria-label="Restore"><svg viewBox="0 0 12 12"><path d="M1 3.500h7.500V11H1zM3.500 3V1H11v7.500H9"/></svg></button>
            <button aria-label="Close"><svg viewBox="0 0 12 12"><path d="M1 1l10 10M11 1L1 11"/></svg></button>
        </div>
    </header>

    <div class="menubar">
        <span class="grip">▲</span>
        <nav class="menus">
            <button>File</button><button>Edit</button><button>Render</button><button>Assets</button><button>Windows</button><button>Labs</button><button>Help</button>
        </nav>
        <div class="combo desk"><svg class="ic16"><use href="#i-layout"/></svg><select aria-label="Desktop"><option>Build</option></select><span class="updown"></span></div>
        <div class="combo desk"><svg class="ic16"><use href="#i-radial"/></svg><select aria-label="Radial menu"><option>Main</option></select><span class="updown"></span></div>
        <span class="spacer"></span>
        <div class="combo takes"><svg class="ic16"><use href="#i-clap"/></svg><select aria-label="Take"><option>Main</option></select><span class="updown"></span></div>
        <button class="tool help" aria-label="Help"><svg class="ic16"><use href="#i-help"/></svg></button>
    </div>

    <div class="shelves">
        <span class="grip tall">▲</span>
        <section class="shelf shelf-left">
            <div class="shelf-tabs">
                <button class="active">Create</button><button>Modify</button><button>Model</button><button>Polygon</button><button>Deform</button><button>Texture</button><button>Rigging</button><button>Characters</button><button>Constraints</button><button>Hair Utils</button><button>Guide Process</button><button>Terrain FX</button><button>Simple FX</button><button>Volume</button><button class="plus" aria-label="Add shelf"></button><span class="spacer"></span><button class="drop" aria-label="Shelf menu"></button>
            </div>
            <div class="shelf-tools">
                <button><svg><use href="#i-box"/></svg><span>Box</span></button>
                <button><svg><use href="#i-sphere"/></svg><span>Sphere</span></button>
                <button><svg><use href="#i-tube"/></svg><span>Tube</span></button>
                <button><svg><use href="#i-torus"/></svg><span>Torus</span></button>
                <button><svg><use href="#i-grid"/></svg><span>Grid</span></button>
                <button><svg><use href="#i-null"/></svg><span>Null</span></button>
                <button><svg><use href="#i-line"/></svg><span>Line</span></button>
                <button><svg><use href="#i-circle"/></svg><span>Circle</span></button>
                <button><svg><use href="#i-bezier"/></svg><span>Curve Bezier</span></button>
                <button><svg><use href="#i-draw"/></svg><span>Draw Curve</span></button>
                <button><svg><use href="#i-path"/></svg><span>Path</span></button>
                <button><svg><use href="#i-spray"/></svg><span>Spray Paint</span></button>
                <button><svg><use href="#i-font"/></svg><span>Font</span></button>
                <button class="two"><svg><use href="#i-platonic"/></svg><span>Platonic<br>Solids</span></button>
                <button><svg><use href="#i-lsystem"/></svg><span>L-System</span></button>
                <button><svg><use href="#i-metaball"/></svg><span>Metaball</span></button>
                <button><svg><use href="#i-file"/></svg><span>File</span></button>
                <button><svg><use href="#i-spiral"/></svg><span>Spiral</span></button>
                <button><svg><use href="#i-helix"/></svg><span>Helix</span></button>
                <button><svg><use href="#i-quick"/></svg><span>Quick Shapes</span></button>
            </div>
        </section>
        <span class="shelf-split"></span>
        <section class="shelf shelf-right">
            <div class="shelf-tabs">
                <button class="active">Lights and Cameras</button><button>Collisions</button><button>Particles</button><button>Grains</button><button>Vellum</button><button>Rigid Bodies</button><button>Particle Fluids</button><button>Viscous Fluids</button><button>Oceans</button><button>Pyro FX</button><button>FEM</button><button>Wires</button><button>Crowds</button><button>Drive Simulation</button><button class="plus" aria-label="Add shelf"></button><span class="spacer"></span><button class="drop" aria-label="Shelf menu"></button>
            </div>
            <div class="shelf-tools">
                <button><svg><use href="#i-camera"/></svg><span>Camera</span></button>
                <button><svg><use href="#i-point"/></svg><span>Point Light</span></button>
                <button><svg><use href="#i-spot"/></svg><span>Spot Light</span></button>
                <button><svg><use href="#i-area"/></svg><span>Area Light</span></button>
                <button class="two"><svg><use href="#i-geolight"/></svg><span>Geometry<br>Light</span></button>
                <button><svg><use href="#i-volume"/></svg><span>Volume Light</span></button>
                <button><svg><use href="#i-distant"/></svg><span>Distant Light</span></button>
                <button class="two"><svg><use href="#i-env"/></svg><span>Environment<br>Light</span></button>
                <button><svg><use href="#i-sky"/></svg><span>Sky Light</span></button>
                <button><svg><use href="#i-gi"/></svg><span>GI Light</span></button>
                <button><svg><use href="#i-caustic"/></svg><span>Caustic Light</span></button>
                <button><svg><use href="#i-portal"/></svg><span>Portal Light</span></button>
                <button><svg><use href="#i-ambient"/></svg><span>Ambient Light</span></button>
                <button class="two"><svg><use href="#i-stereo"/></svg><span>Stereo<br>Camera</span></button>
                <button><svg><use href="#i-vr"/></svg><span>VR Camera</span></button>
                <button><svg><use href="#i-switcher"/></svg><span>Switcher</span></button>
                <button class="two"><svg><use href="#i-gamepad"/></svg><span>Gamepad<br>Camera</span></button>
            </div>
        </section>
    </div>

    <main class="panes">
        <section class="pane scene">
            <div class="pane-tabs">
                <button class="active">Scene View<i>×</i></button><button>Animation Editor<i>×</i></button><button>Render View<i>×</i></button><button>Composite View<i>×</i></button><button>Motion FX View<i>×</i></button><button>Geometry Spreadsheet<i>×</i></button><button class="plus" aria-label="New tab"></button>
                <span class="spacer"></span><button class="maxi" aria-label="Maximize pane"></button><button class="drop" aria-label="Pane menu"></button>
            </div>
            <div class="pathbar">
                <button class="tool more" aria-label="Back"><svg class="ic18"><use href="#i-back"/></svg></button>
                <button class="tool dim" aria-label="Forward"><svg class="ic18"><use href="#i-fwd"/></svg></button>
                <div class="crumbs">
                    <button><svg><use href="#i-obj"/></svg>obj</button><button><svg><use href="#i-shapes"/></svg>spiralStaircase</button><button><svg><use href="#i-crate"/></svg>spiralstaircase</button>
                    <span class="spacer"></span><button class="crumb-drop" aria-label="Path history">▼</button>
                </div>
                <button class="tool" aria-label="Pin"><svg class="ic16"><use href="#i-pin"/></svg></button>
                <button class="tool" aria-label="Link group"><svg class="ic18"><use href="#i-target"/></svg></button>
                <button class="tool more gap" aria-label="Display"><svg class="ic18"><use href="#i-box"/></svg></button>
                <button class="tool more" aria-label="Objects"><svg class="ic18"><use href="#i-objmix"/></svg></button>
                <button class="tool more" aria-label="Layout"><svg class="ic18"><use href="#i-maxi"/></svg></button>
            </div>
            <div class="viewtools">
                <span class="grip">▲</span>
                <button class="tool more" aria-label="Grid"><svg class="ic16"><use href="#i-dots"/></svg></button>
                <div class="viewtools-mid">
                    <button class="tool more wide" aria-label="Tumble"><svg class="ic18"><use href="#i-sel1"/></svg></button>
                    <button class="tool more wide" aria-label="Track"><svg class="ic18"><use href="#i-sel2"/></svg></button>
                    <button class="tool more wide" aria-label="Dolly"><svg class="ic18"><use href="#i-sel3"/></svg></button>
                    <span class="vsep"></span>
                    <button class="tool on" aria-label="Show all"><svg class="ic18"><use href="#i-people"/></svg></button>
                    <button class="tool" aria-label="Zoom view"><svg class="ic16"><use href="#i-viewzoom"/></svg></button>
                    <span class="vsep"></span>
                    <button class="tool" aria-label="Stop"><svg class="ic16"><use href="#i-stopc"/></svg></button>
                    <span class="vsep"></span>
                    <button class="tool" aria-label="Snapshot"><svg class="ic18"><use href="#i-snap"/></svg></button>
                    <button class="tool" aria-label="Render settings"><svg class="ic16"><use href="#i-gearbox"/></svg></button>
                </div>
                <button class="tool more" aria-label="Visibility"><svg class="ic18"><use href="#i-tree3"/></svg></button>
                <button class="tool" aria-label="Help"><svg class="ic16"><use href="#i-help"/></svg></button>
            </div>
            <div class="scene-body">
                <aside class="toolbar left">
                    <span class="collapse">◀</span>
                    <div class="stack">
                        <button class="more" aria-label="Objects"><svg><use href="#i-cone"/></svg></button>
                        <button class="more on" aria-label="Primitives"><svg><use href="#i-diamonds"/></svg></button>
                        <button class="more" aria-label="Dynamics"><svg><use href="#i-gcube"/></svg></button>
                    </div>
                    <hr>
                    <button class="more" aria-label="Select"><svg><use href="#i-arrow"/></svg></button>
                    <button class="on" aria-label="Secure selection"><svg class="small"><use href="#i-lock"/></svg></button>
                    <button aria-label="Move"><svg><use href="#i-move"/></svg></button>
                    <button aria-label="Rotate"><svg><use href="#i-rotate"/></svg></button>
                    <button aria-label="Scale"><svg><use href="#i-scale"/></svg></button>
                    <button aria-label="Pose"><svg><use href="#i-pose"/></svg></button>
                    <button class="more" aria-label="Handles"><svg><use href="#i-handles"/></svg></button>
                    <hr>
                    <button class="more" aria-label="Snap to grid"><svg><use href="#i-maggrid"/></svg></button>
                    <button class="more" aria-label="Snap to curve"><svg><use href="#i-magcurve"/></svg></button>
                    <button class="more" aria-label="Snap to point"><svg><use href="#i-magpoint"/></svg></button>
                    <button class="more" aria-label="Multi snap"><svg><use href="#i-magnet"/></svg></button>
                    <hr>
                    <button class="more on" aria-label="View"><svg><use href="#i-camera"/></svg></button>
                    <button aria-label="Render region"><svg><use href="#i-region"/></svg></button>
                    <button class="more" aria-label="Inspect"><svg><use href="#i-stand"/></svg></button>
                    <span class="spacer"></span>
                    <button class="more" aria-label="Flipbook images"><svg class="small"><use href="#i-cards"/></svg></button>
                    <button class="more" aria-label="Flipbook"><svg class="small"><use href="#i-reel"/></svg></button>
                </aside>
                <div class="viewport">
                    <svg class="view3d" viewBox="38 182 1239 874" preserveAspectRatio="xMidYMid slice">
                        <g id="floor"></g>
                        <g class="axis-red">
                            <text transform="translate(572 196) rotate(4)">-25</text>
                            <text transform="translate(594 249) rotate(80)">-20</text>
                            <text transform="translate(615 332) rotate(80)">-15</text>
                            <text transform="translate(642 431) rotate(80)">-10</text>
                            <text transform="translate(674 556) rotate(60)">-5</text>
                            <text class="big" transform="translate(721 706) rotate(174)">0</text>
                            <text class="big" transform="translate(757 886) rotate(80)">5</text>
                        </g>
                        <g class="axis-gray">
                            <text transform="translate(244 777) rotate(172)">10</text>
                            <text transform="translate(479 749) rotate(172)">5</text>
                            <text transform="translate(918 696) rotate(172)">-5</text>
                            <text transform="translate(1127 670) rotate(172)">-10</text>
                        </g>
                        <g id="stairs" transform="translate(560 370) scale(0.3333)"></g>
                        <g class="gizmo">
                            <path stroke="#17d41b" d="M49 1040v11"/><path stroke="#1d1dd8" d="M49 1042h-6"/><path stroke="#e22" d="M49 1042l4 8"/>
                            <text x="48" y="1038" fill="#17d41b">y</text><text x="39" y="1047" fill="#1d1dd8">z</text><text x="51" y="1052" fill="#e22">x</text>
                        </g>
                    </svg>
                    <div class="view-name"><svg><use href="#i-camera"/></svg><b>View</b></div>
                    <div class="view-menus"><button>Persp<i></i></button><button>No cam<i></i></button></div>
                    <div class="oplist">
                        <div class="oplist-top">
                            <input type="text" aria-label="Filter">
                            <button aria-label="Options"><svg><use href="#i-gear"/></svg></button>
                            <button class="on" aria-label="Highlight"><svg viewBox="0 0 24 24"><circle cx="12" cy="12" r="10" fill="none" stroke="#46525d" stroke-dasharray="1 2"/><path fill="#f7df5c" stroke="#8a7326" d="M12 4l8 8-8 8-8-8z"/></svg></button>
                        </div>
                        <p>/obj/spiralStaircase/spiralstaircase/ray1</p>
                        <span class="oplist-scroll"><i></i></span>
                        <span class="oplist-mark">Education</span>
                    </div>
                    <span class="edition">Education Edition</span>
                </div>
                <aside class="toolbar right">
                    <span class="collapse">▶</span>
                    <button class="more on" aria-label="Construction plane"><svg><use href="#i-plane"/></svg></button>
                    <button class="more" aria-label="Ghost objects"><svg><use href="#i-ghost"/></svg></button>
                    <button aria-label="Lock camera"><svg><use href="#i-lock"/></svg></button>
                    <button aria-label="No lighting"><svg><use href="#i-bulbx"/></svg></button>
                    <button class="more" aria-label="Headlight"><svg><use href="#i-disc"/></svg></button>
                    <button class="more on" aria-label="Normal lighting"><svg><use href="#i-bulb"/></svg></button>
                    <button class="more" aria-label="High quality lighting"><svg><use href="#i-bulbplus"/></svg></button>
                    <button class="more" aria-label="Shadows"><svg><use href="#i-bulbbase"/></svg></button>
                    <button class="more on" aria-label="Materials"><svg><use href="#i-checkcube"/></svg></button>
                    <button class="more" aria-label="Stereo"><svg><use href="#i-glasses"/></svg></button>
                    <button class="more" aria-label="Stereo playback"><svg><use href="#i-glasses2"/></svg></button>
                    <hr class="tight">
                    <button aria-label="Points"><svg><use href="#i-dot"/></svg></button>
                    <button aria-label="Point normals"><svg><use href="#i-norm"/></svg></button>
                    <button aria-label="Point trails"><svg><use href="#i-norm2"/></svg></button>
                    <button class="num" aria-label="Point numbers"><span>12</span></button>
                    <button aria-label="Primitive normals"><svg><use href="#i-prim"/></svg></button>
                    <button class="num square" aria-label="Primitive numbers"><span>12</span></button>
                    <button aria-label="Hulls"><svg><use href="#i-curvec"/></svg></button>
                    <button class="on" aria-label="Backfaces"><svg><use href="#i-facet"/></svg></button>
                    <button class="more on" aria-label="UV display"><svg><use href="#i-uv"/></svg></button>
                    <button aria-label="Packed"><svg><use href="#i-bdiamond"/></svg></button>
                    <button aria-label="Guides"><svg><use href="#i-clover"/></svg></button>
                    <button aria-label="Origin"><svg><use href="#i-tri"/></svg></button>
                    <button class="on" aria-label="Safe area"><svg><use href="#i-stencil"/></svg></button>
                    <button class="more on" aria-label="Background"><svg><use href="#i-photo"/></svg></button>
                    <hr>
                    <button class="more on" aria-label="Visualizers"><svg><use href="#i-marker"/></svg></button>
                    <span class="spacer"></span>
                    <hr>
                    <button aria-label="Info"><svg><use href="#i-info"/></svg></button>
                    <button class="on" aria-label="Views"><svg><use href="#i-quad"/></svg></button>
                    <button class="more" aria-label="Display options"><svg><use href="#i-eye"/></svg></button>
                </aside>
            </div>
        </section>

        <div class="side">
            <section class="pane params">
                <div class="pane-tabs">
                    <button class="active italic">output0<i>×</i></button><button>Take List<i>×</i></button><button>Performance Monitor<i>×</i></button><button class="plus" aria-label="New tab"></button>
                    <span class="spacer"></span><button class="maxi" aria-label="Maximize pane"></button><button class="drop" aria-label="Pane menu"></button>
                </div>
                <div class="pathbar">
                    <button class="tool more" aria-label="Back"><svg class="ic18"><use href="#i-back"/></svg></button>
                    <button class="tool dim" aria-label="Forward"><svg class="ic18"><use href="#i-fwd"/></svg></button>
                    <div class="crumbs">
                        <button><svg><use href="#i-obj"/></svg>obj</button><button><svg><use href="#i-shapes"/></svg>spiralStaircase</button><button><svg><use href="#i-crate"/></svg>spiralstaircase</button>
                        <span class="spacer"></span><button class="crumb-drop" aria-label="Path history">▼</button>
                    </div>
                    <button class="tool" aria-label="Pin"><svg class="ic16"><use href="#i-pin"/></svg></button>
                    <button class="tool" aria-label="Link group"><svg class="ic18"><use href="#i-target"/></svg></button>
                </div>
                <div class="node-head">
                    <button class="tool more" aria-label="Node type"><svg class="ic18"><use href="#i-flag"/></svg></button>
                    <label for="nodeName">Output</label>
                    <input type="text" id="nodeName" value="output0">
                    <button class="tool more" aria-label="Parameters"><svg class="ic16"><use href="#i-gear"/></svg></button>
                    <button class="tool more" aria-label="Presets"><svg class="ic16"><use href="#i-brush"/></svg></button>
                    <button class="tool" aria-label="Search"><svg class="ic16"><use href="#i-search"/></svg></button>
                    <button class="tool" aria-label="Info"><svg class="ic16"><use href="#i-info"/></svg></button>
                    <button class="tool" aria-label="Help"><svg class="ic16"><use href="#i-help"/></svg></button>
                </div>
                <div class="parm">
                    <label for="outputIndex">Output Index</label>
                    <input type="text" id="outputIndex" value="0">
                    <input type="range" aria-label="Output Index slider" min="0" max="10" value="0">
                </div>
            </section>
            <span class="hsplit"></span>
            <section class="pane network">
                <div class="pane-tabs">
                    <button class="active italic">/obj/spiralStaircase/spiralstaircase<i>×</i></button><button>Tree View<i>×</i></button><button>Material Palette<i>×</i></button><button>Asset Browser<i>×</i></button><button class="plus" aria-label="New tab"></button>
                    <span class="spacer"></span><button class="maxi" aria-label="Maximize pane"></button><button class="drop" aria-label="Pane menu"></button>
                </div>
                <div class="pathbar">
                    <button class="tool more" aria-label="Back"><svg class="ic18"><use href="#i-back"/></svg></button>
                    <button class="tool dim" aria-label="Forward"><svg class="ic18"><use href="#i-fwd"/></svg></button>
                    <div class="crumbs">
                        <button><svg><use href="#i-obj"/></svg>obj</button><button><svg><use href="#i-shapes"/></svg>spiralStaircase</button><button><svg><use href="#i-crate"/></svg>spiralstaircase</button>
                        <span class="spacer"></span><button class="crumb-drop" aria-label="Path history">▼</button>
                    </div>
                    <button class="tool" aria-label="Pin"><svg class="ic16"><use href="#i-pin"/></svg></button>
                    <button class="tool" aria-label="Link group"><svg class="ic18"><use href="#i-target"/></svg></button>
                </div>
                <div class="net-menu">
                    <span class="grip">▲</span>
                    <nav class="menus">
                        <button>Add</button><button>Edit</button><button>Go</button><button>View</button><button>Tools</button><button>Layout</button><button>Labs</button><button>Help</button>
                    </nav>
                    <div class="net-tools">
                        <button aria-label="Tools"><svg><use href="#i-wrench"/></svg></button>
                        <button aria-label="Tree"><svg><use href="#i-list"/></svg></button>
                        <button aria-label="List"><svg><use href="#i-rows"/></svg></button>
                        <span class="spacer"></span>
                        <button aria-label="Colors"><svg><use href="#i-palette"/></svg></button>
                        <button aria-label="Shapes"><svg><use href="#i-nodes"/></svg></button>
                        <span class="spacer"></span>
                        <button aria-label="Network box"><svg><use href="#i-netbox"/></svg></button>
                        <button aria-label="Sticky note"><svg><use href="#i-note"/></svg></button>
                        <button aria-label="Image"><svg><use href="#i-image"/></svg></button>
                        <button aria-label="Asset"><svg><use href="#i-crate"/></svg></button>
                        <span class="spacer"></span>
                        <button aria-label="Find"><svg><use href="#i-search"/></svg></button>
                        <button aria-label="Show"><svg><use href="#i-eye"/></svg></button>
                    </div>
                </div>
                <div class="graph">
                    <span class="mark edition-mark">Education Edition</span>
                    <span class="mark context">Geometry</span>
                    <div class="netbox"></div>
                    <svg class="wires" viewBox="0 0 613 399">
                        <g class="wire">
                            <path d="M215 0v168M215 168c0 12-13 8-13 22v53"/>
                            <path class="fade" d="M0 283c22-31 52-51 84-51"/><path class="bold" d="M84 232h108"/><path d="M192 232h14c12 0 16 6 18 14"/>
                            <path class="fade" d="M38 399v-86c0-40 30-78 80-80"/><path class="bold" d="M118 233h82"/><path d="M200 233h12c12 0 18 6 20 14"/>
                            <path class="dots" d="M0 278c14-5 24-7 40-7h144"/>
                            <path d="M215 290v19c0 8 6 9 34 9"/><path class="fade" d="M249 318h364"/>
                            <path class="bold" d="M218 319v82"/>
                        </g>
                        <g class="ports">
                            <circle cx="215" cy="12" r="2.500"/><circle cx="215" cy="33" r="2.500"/><circle cx="215" cy="42" r="2.500"/><circle cx="215" cy="63" r="2.500"/><circle cx="215" cy="75" r="2.500"/><circle cx="215" cy="96" r="2.500"/><circle cx="215" cy="106" r="2.500"/><circle cx="215" cy="127" r="2.500"/><circle cx="215" cy="146" r="2.500"/><circle cx="215" cy="167" r="2.500"/>
                            <circle cx="202" cy="244" r="2.500"/><circle cx="211" cy="245" r="2.500"/><circle cx="220" cy="246" r="2.500"/><circle cx="229" cy="247" r="2.500"/><circle cx="215" cy="267" r="2.500"/>
                        </g>
                        <path fill="#4f7a6d" d="M244 94h2v2h-2zM247 94h2v2h-2zM244 97h2v2h-2zM247 97h2v2h-2z"/>
                        <g class="ring">
                            <circle cx="216" cy="295" r="25" fill="#44586f"/><circle cx="216" cy="295" r="17" fill="#574f6b"/>
                            <path fill="#080804" stroke="#444" d="M202 260l-19 15-4 6 13 9c2-6 6-11 12-15z"/>
                            <path fill="#006a92" d="M232 260c10 4 16 11 19 20l-12 8c-2-6-6-10-12-13z"/><path fill="none" stroke="#12aeee" stroke-width="2" d="M232 260c10 4 16 11 19 20"/>
                            <path fill="#1c1c1c" stroke="#444" d="M178 281c-3 9-3 18 0 27l11-5c-2-6-2-12 0-17z"/>
                            <path fill="#100909" stroke="#444" d="M182 314c4 9 11 15 18 19l5-12c-6-3-10-7-12-13z"/>
                            <path fill="#0b0810" stroke="#444" d="M250 314c-4 9-11 15-18 19l-5-12c6-3 10-7 12-13z"/>
                            <path stroke="#f2c91d" stroke-width="2.500" d="M193 270v5"/><path fill="#f2c91d" d="M189 274h8l-4 4z"/>
                            <circle cx="239" cy="271" r="2.500" fill="#64a5f2"/>
                            <circle cx="183" cy="291" r="1.200" fill="#fff"/><path stroke="#fff" stroke-width="2" d="M183 293v5M181 298h4"/>
                            <path stroke="#718b94" stroke-width="1.500" d="M193 315v7M190 317l6 4M196 317l-6 4"/>
                            <path stroke="#e9a6f0" stroke-width="2.500" d="M239 316v7"/><path fill="#e9a6f0" d="M235 317h8l-4-4z"/>
                            <g fill="#c9c9c9"><circle cx="207" cy="285" r="2.500"/><circle cx="225" cy="285" r="2.500"/><circle cx="216" cy="305" r="2.500"/></g>
                        </g>
                    </svg>
                    <div class="node n-top"><small>group1</small></div>
                    <div class="node n1"><i><svg viewBox="0 0 20 12"><path fill="#b8a12b" d="M4 5h12v2H4zM8 3h4v6H8z"/></svg></i><span>grouppromote3</span><small>group1</small></div>
                    <div class="node n2"><i><svg viewBox="0 0 20 12"><path fill="#8e9290" d="M6 3l7-2 1 10H7z"/><path stroke="#444" d="M8 4v6M11 3v7"/></svg></i><span>delete1</span></div>
                    <div class="node n3"><i><svg viewBox="0 0 20 12"><path fill="none" stroke="#c33" d="M5 2l2 6 5-6"/><path fill="none" stroke="#48b" d="M9 6l6-3-1 8-4-1"/></svg></i><span>polypath2</span></div>
                    <div class="node n4"><i><svg viewBox="0 0 20 12"><path fill="none" stroke="#b33" d="M4 4c4-6 7 5 12 0M4 9c4-6 7 5 12 0"/></svg></i><span>resample1</span></div>
                    <div class="node n5"><i><svg viewBox="0 0 20 12"><path stroke="#777" stroke-width="2" stroke-dasharray="2 1" d="M5 3h10M5 6h10M5 9h10"/><path fill="#d9962c" d="M9 1h4v6H9z"/></svg></i><span>grouprange2</span><small>group1</small></div>
                    <div class="node n6 error"><i><svg viewBox="0 0 20 12"><path fill="#b38e19" d="M6 2h9v4H6z"/><path fill="#513c05" d="M6 6h6v5H6z"/><circle cx="14" cy="9" r="2" fill="#ddd"/></svg></i><span>attribwrangle5</span></div>
                    <div class="node n7 current"><i><svg viewBox="0 0 20 12"><path fill="#6f7a84" d="M5 0h5v8H5z"/><path fill="#a67a7a" d="M11 5h5v6h-5z"/><path stroke="#333" d="M9 3l5 7"/></svg></i><span>ray1</span></div>
                    <div class="tooltip" role="tooltip">Display/Render<br>Click to set both display and render flags.<br>Ctrl-click to set only the render flag.<br>Alt-click to set only the display flag.</div>
                    <span class="hint">ray1 (Ray) node</span>
                </div>
            </section>
        </div>
    </main>

    <footer class="playbar">
        <span class="grip foot">▼</span>
        <div class="play-main">
            <div class="play-row">
                <div class="btns transport">
                    <button aria-label="First frame"><svg><use href="#i-first"/></svg></button><button aria-label="Play backwards"><svg><use href="#i-rev"/></svg></button><button class="on" aria-label="Stop"><svg><use href="#i-stop"/></svg></button><button aria-label="Play"><svg><use href="#i-play"/></svg></button><button aria-label="Last frame"><svg><use href="#i-last"/></svg></button>
                </div>
                <input type="text" class="frame" aria-label="Current frame" value="239">
                <div class="btns steps">
                    <button aria-label="Step back"><svg><use href="#i-stepb"/></svg></button><button aria-label="Step forward"><svg><use href="#i-stepf"/></svg></button>
                </div>
                <div class="timeline">
                    <svg id="ticks"></svg>
                    <div id="frames"></div>
                </div>
            </div>
            <div class="play-row second">
                <div class="btns options">
                    <button aria-label="Scope"><svg><use href="#i-panelcur"/></svg></button><button aria-label="Audio"><svg><use href="#i-speaker"/></svg></button><button class="more" aria-label="Loop"><svg><use href="#i-loop"/></svg></button><button aria-label="Real time"><svg><use href="#i-clock"/></svg></button><button class="more" aria-label="Ticks"><svg><use href="#i-ticks"/></svg></button><button aria-label="Range"><svg><use href="#i-slide"/></svg></button>
                </div>
                <div class="btns keys">
                    <button aria-label="Previous key"><svg><use href="#i-keyprev"/></svg></button><button aria-label="Next key"><svg><use href="#i-keynext"/></svg></button>
                </div>
                <input type="text" class="num-field flat" aria-label="Global start" value="1">
                <input type="text" class="num-field" aria-label="Range start" value="1">
                <div class="range"></div>
                <input type="text" class="num-field" aria-label="Range end" value="240">
                <input type="text" class="num-field flat" aria-label="Global end" value="240">
            </div>
        </div>
        <div class="key-set">
            <button class="key-round" aria-label="Set key"><svg><use href="#i-key"/></svg></button><button class="key-drop" aria-label="Key options">▼</button>
        </div>
        <div class="channels">
            <button class="sq more" aria-label="Channel list"><svg><use href="#i-chan"/></svg></button>
            <button class="wide-btn">0 keys, 0/0 channels<span>▲</span></button>
            <button class="sq" aria-label="Animation graph"><svg><use href="#i-graph"/></svg></button>
            <div class="combo key-all"><select aria-label="Key mode"><option>Key All Channels</option></select><span class="updown"></span></div>
        </div>
    </footer>

    <div class="status">
        <span>Successfully loaded SprialStairs.hipnc</span>
        <span class="spacer"></span>
        <div class="cook">
            <button class="tool more" aria-label="Cache"><svg class="ic18"><use href="#i-brain"/></svg></button>
            <button class="tool" aria-label="Recook"><svg class="ic18"><use href="#i-refresh"/></svg></button>
            <div class="combo"><select aria-label="Update mode"><option>Auto Update</option></select><span class="updown"></span></div>
        </div>
    </div>

    <script src="script.js"></script>
</body>
</html>
```
FILE: styles.css
```css
* {
    box-sizing: border-box;
}

body {
    margin: 0;
    height: 100vh;
    display: flex;
    flex-direction: column;
    overflow: hidden;
    background: #1c1c1c;
    color: #cccccc;
    font-family: "Noto Sans CJK SC", "Noto Sans", sans-serif;
    font-size: 10px;
    line-height: 14px;
}

button, input, select {
    font: inherit;
    color: inherit;
    margin: 0;
    padding: 0;
    border: none;
    border-radius: 0;
    background: none;
    outline: none;
}

button {
    white-space: nowrap;
}

i {
    font-style: normal;
}

svg {
    display: block;
    flex: none;
}

.sprite {
    position: absolute;
    width: 0;
    height: 0;
}

.spacer {
    flex: 1;
}

.ic16 {
    width: 16px;
    height: 16px;
}

.ic18 {
    width: 18px;
    height: 18px;
}

/* Title bar */
.titlebar {
    height: 26px;
    flex: none;
    display: flex;
    align-items: center;
    background: #eff4f9;
    color: #101010;
    border-bottom: 1px solid #000000;
}

.logo {
    width: 19px;
    height: 18px;
    margin-right: 7px;
}

.title {
    flex: 1;
    font-family: "Open Sans", "Noto Sans", sans-serif;
    font-size: 13px;
    line-height: 20px;
    white-space: nowrap;
}

.window-buttons {
    display: flex;
}

.window-buttons button {
    width: 53px;
    height: 24px;
    display: grid;
    place-items: center;
}

.window-buttons svg {
    width: 12px;
    height: 12px;
    fill: none;
    stroke: #111111;
}

/* Menu bar */
.menubar {
    height: 23px;
    flex: none;
    display: flex;
    align-items: stretch;
    background: linear-gradient(#3e3e3e, #323232);
    border-bottom: 1px solid #111111;
}

.grip {
    width: 9px;
    flex: none;
    font-size: 7px;
    line-height: 8px;
    color: #000000;
    background: linear-gradient(90deg, #4a4a4a, #363636);
    border-right: 1px solid #151515;
    overflow: hidden;
}

.menus {
    display: flex;
    align-items: center;
    font-size: 11px;
    line-height: 18px;
}

.menubar .menus {
    padding-left: 6px;
    gap: 8px;
    width: 281px;
}

.combo {
    display: flex;
    align-items: center;
    background: linear-gradient(#545454, #3d3d3d);
}

.combo select {
    appearance: none;
    flex: 1;
    min-width: 0;
}

.menubar .combo select {
    font-size: 11px;
    line-height: 18px;
}

.updown {
    width: 18px;
    align-self: stretch;
    background: #2e2e2e;
    display: flex;
    flex-direction: column;
    align-items: center;
    justify-content: center;
    gap: 3px;
}

.updown::before, .updown::after {
    content: "";
    border: 3px solid transparent;
}

.updown::before {
    border-top: none;
    border-bottom: 5px solid #8f8f8f;
}

.updown::after {
    border-bottom: none;
    border-top: 5px solid #8f8f8f;
}

.desk {
    width: 119px;
    margin-right: 4px;
    padding-left: 5px;
    gap: 4px;
}

.takes {
    width: 161px;
    padding-left: 4px;
    gap: 5px;
}

.tool {
    position: relative;
    width: 22px;
    height: 22px;
    flex: none;
    display: grid;
    place-items: center;
    color: #d8d8d8;
}

.tool.dim {
    color: #5f5f5f;
}

.menubar .help {
    width: 29px;
}

.more::after {
    content: "";
    position: absolute;
    right: 1px;
    bottom: 1px;
    border: 3px solid transparent;
    border-left: 4px solid #8b8b8b;
    border-right: none;
}

.on {
    background: #5f7896;
    box-shadow: inset 0 0 0 1px #7c94b2;
}

.on.more::after {
    border-left-color: #15191d;
}

/* Shelves */
.shelves {
    height: 54px;
    flex: none;
    display: grid;
    grid-template-columns: 9px 957fr 9px 945fr;
    border-bottom: 2px solid #151515;
    background: #232323;
}

.grip.tall {
    line-height: 9px;
}

.shelf {
    min-width: 0;
    display: flex;
    flex-direction: column;
}

.shelf-split {
    background: radial-gradient(circle, #111111 1px, transparent 1px) center / 3px 3px, #464646;
    border: solid #151515;
    border-width: 0 1px;
}

.shelf-tabs {
    display: flex;
    height: 17px;
    background: #2b2b2b;
    font-size: 8px;
    line-height: 13px;
}

.shelf-tabs button {
    padding: 0 7px;
    color: #bcbcbc;
    background: #2b2b2b;
    border-right: 1px solid #111111;
    border-bottom: 1px solid #111111;
    box-shadow: inset 1px 1px #3f3f3f;
}

.shelf-tabs .active {
    background: #474747;
    border-bottom: none;
}

.shelf-tabs .plus, .shelf-tabs .drop, .pane-tabs .plus, .pane-tabs .drop {
    border: none;
    background: none;
    box-shadow: none;
}

.shelf-tabs .drop, .pane-tabs .drop {
    width: 16px;
    padding: 0;
}

.drop::before {
    content: "";
    display: inline-block;
    border: 3px solid transparent;
    border-top: 5px solid #e4e4e4;
    border-bottom: none;
    vertical-align: middle;
}

.plus::before {
    content: "";
    display: block;
    width: 9px;
    height: 9px;
    background: linear-gradient(#eeeeee, #eeeeee) center / 9px 2px no-repeat, linear-gradient(#eeeeee, #eeeeee) center / 2px 9px no-repeat;
}

.shelf-tools {
    flex: 1;
    display: flex;
    background: linear-gradient(#474747, #373737);
    font-size: 8px;
    line-height: 10px;
}

.shelf-left .shelf-tools {
    padding-left: 1px;
}

.shelf-tools button {
    min-width: 38px;
    padding: 1px 4px 0;
    display: flex;
    flex-direction: column;
    align-items: center;
    justify-content: flex-start;
}

.shelf-tools svg {
    width: 20px;
    height: 20px;
    margin-bottom: 3px;
}

.shelf-tools .two {
    min-width: 66px;
    line-height: 8px;
}

.shelf-tools .two svg {
    width: 18px;
    height: 18px;
    margin-bottom: 0;
}

/* Panes */
.panes {
    flex: 1;
    min-height: 0;
    display: grid;
    grid-template-columns: minmax(0, 1301fr) minmax(0, 614fr);
    gap: 5px;
    background: #444444;
    border-bottom: 2px solid #4a4a4a;
}

.pane {
    min-height: 0;
    display: flex;
    flex-direction: column;
    background: #3a3a3a;
}

.side {
    min-height: 0;
    display: flex;
    flex-direction: column;
}

.params {
    height: 475px;
    flex: none;
}

.network {
    flex: 1;
}

.hsplit {
    height: 6px;
    flex: none;
    background: repeating-linear-gradient(90deg, #999999 0 1px, transparent 1px 3px) center / 18px 4px no-repeat, #484848;
}

.pane-tabs {
    display: flex;
    height: 18px;
    flex: none;
    background: #2d2d2d;
    font-size: 9px;
    line-height: 16px;
}

.pane-tabs button {
    padding: 0 5px 0 6px;
    color: #c0c0c0;
    background: #2a2a2a;
    border-right: 1px solid #151515;
    border-bottom: 1px solid #1d1d1d;
}

.pane-tabs .active {
    background: #454545;
    border-bottom: none;
}

.scene .pane-tabs .active {
    padding-left: 12px;
}

.pane-tabs i {
    margin-left: 10px;
    color: #ffffff;
    font-weight: bold;
}

.network .pane-tabs .active i {
    margin-left: 4px;
}

.italic {
    font-style: italic;
}

.pane-tabs .plus {
    padding: 0 7px;
}

.pane-tabs .maxi {
    width: 10px;
    height: 8px;
    margin: 5px 5px 0 0;
    padding: 0;
    background: #deded8;
    border: none;
}

.pathbar {
    height: 31px;
    flex: none;
    display: flex;
    align-items: center;
    padding: 0 0 1px 2px;
    background: linear-gradient(#454545, #393939);
}

.scene .pathbar {
    padding: 0 2px 1px 7px;
}

.crumbs {
    flex: 1;
    min-width: 0;
    height: 22px;
    margin: 0 5px;
    display: flex;
    border: 1px solid #0e0e0e;
    background: #3b3b3b;
    line-height: 16px;
}

.crumbs button {
    display: flex;
    align-items: center;
    gap: 4px;
    padding: 0 8px;
    background: linear-gradient(to top right, transparent 42%, #111111 47%, #111111 53%, transparent 58%) right top / 6px 10px no-repeat, linear-gradient(to bottom right, transparent 42%, #111111 47%, #111111 53%, transparent 58%) right bottom / 6px 10px no-repeat;
    color: #dddddd;
}

.crumbs button:first-child {
    padding-left: 4px;
}

.crumbs button:nth-of-type(3) {
    background: none;
}

.crumbs svg {
    width: 17px;
    height: 17px;
}

.crumbs .crumb-drop {
    width: 13px;
    padding: 0;
    justify-content: center;
    background: #2d2d2d;
    color: #777777;
    font-size: 7px;
}

.gap {
    margin-left: 9px;
}

.viewtools {
    height: 29px;
    flex: none;
    display: flex;
    align-items: center;
    margin-left: 6px;
    background: #2e2e2e;
    border-top: 1px solid #555555;
    border-bottom: 1px solid #0e0e0e;
}

.viewtools .grip {
    align-self: stretch;
    margin-right: 1px;
}

.viewtools-mid {
    flex: 1;
    display: flex;
    align-items: center;
    justify-content: center;
    margin-right: 6px;
}

.viewtools .wide {
    width: 31px;
}

.viewtools .wide::after {
    right: 3px;
}

.vsep {
    width: 1px;
    height: 22px;
    margin: 0 4px;
    background: #444444;
}

.wide + .vsep {
    margin-left: 0;
}

.scene-body {
    flex: 1;
    min-height: 0;
    display: flex;
    background: #363636;
}

.toolbar {
    flex: none;
    display: flex;
    flex-direction: column;
    align-items: center;
    background: #363636;
}

.toolbar.left {
    width: 32px;
    margin-left: 6px;
    padding-bottom: 2px;
}

.toolbar.right {
    width: 24px;
}

.toolbar hr {
    width: 100%;
    height: 1px;
    flex: none;
    border: none;
    margin: 5px 0;
    background: #4a4a4a;
}

.toolbar.left hr {
    margin: 4px 0;
}

.toolbar .tight {
    margin: 3px 0;
}

.collapse {
    width: 100%;
    height: 9px;
    flex: none;
    background: linear-gradient(#555555, #333333);
    border-bottom: 1px solid #111111;
    color: #000000;
    font-size: 8px;
    line-height: 8px;
}

.right .collapse {
    text-align: right;
    margin-bottom: 2px;
}

.toolbar button {
    position: relative;
    display: grid;
    place-items: center;
    flex: none;
}

.left button {
    width: 25px;
    height: 26px;
}

.left .stack {
    margin: 6px 0 0;
    border-bottom: 1px solid #101010;
    background: #424242;
}

.left .stack button {
    width: 23px;
    height: 23px;
}

.left svg {
    width: 20px;
    height: 20px;
}

.left .small {
    width: 16px;
    height: 16px;
}

.right button {
    width: 22px;
    height: 23px;
}

.right svg {
    width: 16px;
    height: 16px;
}

.toolbar .num {
    color: #eeeeee;
    font-weight: bold;
    font-size: 9px;
}

.num::before {
    content: "";
    position: absolute;
    left: 4px;
    bottom: 4px;
    width: 5px;
    height: 5px;
    border-radius: 50%;
    background: #d8d9d2;
}

.num.square::before {
    width: 12px;
    height: 8px;
    border-radius: 3px 0;
    background: #9da09a;
}

.num span {
    position: relative;
    padding: 0 0 4px 4px;
}

/* Viewport */
.viewport {
    position: relative;
    flex: 1;
    min-width: 0;
    background: linear-gradient(#647f8c, #91a3a9 50%, #bfc9c9);
    overflow: hidden;
}

.view3d {
    width: 100%;
    height: 100%;
}

.minor {
    stroke: #4e6472;
    stroke-opacity: 0.24;
}

.major {
    stroke: #465c6c;
    stroke-opacity: 0.34;
    stroke-width: 1.4;
}

.axis-red {
    fill: #97696c;
    opacity: 0.8;
    font-size: 14px;
}

.axis-red .big, .axis-gray {
    font-size: 18px;
}

.axis-gray {
    fill: #667a8b;
}

.stair-line {
    fill: none;
    stroke: #605cff;
    stroke-width: 4;
}

.stair-fine {
    fill: none;
    stroke: #605cff;
    stroke-width: 3;
    stroke-opacity: 0.85;
}

.stair-fill {
    fill: #605cff;
    fill-opacity: 0.6;
}

.stair-curve {
    fill: none;
    stroke: #ffffff;
    stroke-width: 3;
}

.gizmo {
    font-size: 10px;
}

.view-name {
    position: absolute;
    left: 12px;
    top: 10px;
    display: flex;
    align-items: center;
    gap: 8px;
    color: #ffffff;
    font-size: 13px;
    line-height: 24px;
    text-shadow: 1px 1px 1px #222222;
}

.view-name svg {
    width: 24px;
    height: 24px;
}

.view-menus {
    position: absolute;
    right: 5px;
    top: 5px;
    display: flex;
    gap: 5px;
}

.view-menus button {
    height: 18px;
    padding: 0 7px;
    border: 1px solid #9da9af;
    border-radius: 9px;
    background: #6d777e;
    color: #ffffff;
    font-size: 10px;
    line-height: 16px;
}

.view-menus i {
    display: inline-block;
    margin-left: 3px;
    border: 2px solid transparent;
    border-top: 3px solid #ffffff;
    border-bottom: none;
    vertical-align: middle;
}

.oplist {
    position: absolute;
    right: 12px;
    top: 27px;
    width: 225px;
    height: 222px;
    padding: 4px;
    border: 1px solid #1d2930;
    background: rgba(92, 120, 136, 0.5);
}

.oplist-top {
    display: flex;
    align-items: center;
}

.oplist-top input {
    flex: 1;
    min-width: 0;
    height: 20px;
    margin-right: 5px;
    border: 1px solid #121b20;
}

.oplist-top button {
    width: 22px;
    height: 22px;
    display: grid;
    place-items: center;
}

.oplist-top .on {
    margin-left: 3px;
}

.oplist-top svg {
    width: 17px;
    height: 17px;
}

.oplist p {
    margin: 0;
    color: #ffffff;
    line-height: 18px;
}

.oplist-scroll {
    position: absolute;
    right: 4px;
    top: 27px;
    bottom: 3px;
    width: 8px;
    background: rgba(80, 100, 112, 0.4);
}

.oplist-scroll i {
    position: absolute;
    left: 2px;
    top: 76px;
    width: 4px;
    height: 9px;
    background: repeating-linear-gradient(#111111 0 1px, transparent 1px 2px);
}

.oplist-mark {
    position: absolute;
    right: 19px;
    bottom: 0;
    color: #c5cdd1;
    text-shadow: 0 1px 1px #111111;
}

.edition {
    position: absolute;
    right: 12px;
    bottom: 8px;
    color: #f2f200;
}

/* Parameters */
.node-head {
    height: 24px;
    flex: none;
    display: flex;
    align-items: center;
    margin-left: 1px;
    padding-bottom: 1px;
    border-top: 1px solid #1a1a1a;
    border-bottom: 1px solid #1a1a1a;
}

.node-head label {
    font-weight: bold;
    font-size: 11px;
}

.node-head input {
    flex: 1;
    min-width: 0;
    height: 20px;
    margin-right: 4px;
    padding: 0 3px;
    background: #121212;
    font-family: "DejaVu Sans Mono", monospace;
    font-size: 11px;
}

.node-head .tool {
    width: 25px;
}

.parm {
    display: grid;
    grid-template-columns: 142px 70px 1fr;
    align-items: center;
    padding: 3px 11px 0 2px;
}

.parm label {
    text-align: right;
    margin-right: 12px;
}

.parm input[type="text"] {
    width: 70px;
    height: 20px;
    padding: 0 3px;
    background: #121212;
    color: #ffffff;
    font-family: "DejaVu Sans Mono", monospace;
    font-size: 11px;
    font-weight: bold;
}

.parm input[type="range"] {
    appearance: none;
    width: 100%;
    height: 20px;
    margin-left: 2px;
    background: linear-gradient(#080808, #080808) 0 8px / 100% 4px no-repeat, repeating-linear-gradient(90deg, transparent 0 37px, #888888 37px 38px) 1px 12px / 100% 2px no-repeat;
}

.parm input[type="range"]::-webkit-slider-thumb {
    appearance: none;
    width: 4px;
    height: 20px;
    background: #8a8a8a;
    border: 1px solid #555555;
}

/* Network */
.net-menu {
    height: 23px;
    flex: none;
    display: flex;
    align-items: center;
    background: linear-gradient(#424242, #343434);
    border-top: 1px solid #151515;
    border-bottom: 1px solid #101010;
}

.net-menu .grip {
    align-self: stretch;
}

.net-menu .menus {
    padding-left: 9px;
    gap: 13px;
}

.net-tools {
    flex: 1;
    display: flex;
    align-items: center;
    gap: 1px;
    margin-left: 21px;
}

.net-tools button {
    width: 22px;
    display: grid;
    place-items: center;
}

.net-tools svg {
    width: 16px;
    height: 16px;
}

.graph {
    position: relative;
    flex: 1;
    min-height: 0;
    overflow: hidden;
    background: #303030;
}

.mark {
    position: absolute;
    color: #4c4c4c;
}

.edition-mark {
    right: 232px;
    top: 9px;
    font-size: 19px;
    line-height: 26px;
}

.context {
    right: 9px;
    top: 11px;
    font-size: 21px;
    font-weight: bold;
    line-height: 28px;
}

.netbox {
    position: absolute;
    left: 177px;
    top: 0;
    width: 123px;
    height: 309px;
    border-radius: 0 0 5px 5px;
    background: rgba(110, 110, 110, 0.72);
}

.wires {
    position: absolute;
    left: 1px;
    top: 0;
    width: 613px;
    height: 399px;
    overflow: visible;
}

.wire path {
    fill: none;
    stroke: #5d7896;
}

.wire .bold {
    stroke: #456594;
    stroke-width: 2;
}

.wire .fade {
    stroke: #565d65;
}

.wire .dots {
    stroke: #56708e;
    stroke-dasharray: 2 2;
}

.ports {
    fill: #c6c6c6;
}

.node {
    position: absolute;
    left: 194px;
    height: 14px;
    white-space: nowrap;
}

.node > i {
    display: grid;
    place-items: center;
    width: 45px;
    height: 14px;
    border-radius: 3px;
    background: linear-gradient(100deg, transparent 10%, #888888 12%, transparent 15%, transparent 23%, #888888 25%, transparent 28%, transparent 70%, #888888 72%, transparent 75%, transparent 83%, #888888 85%, transparent 88%), #d4d4d4;
}

.node i svg {
    width: 20px;
    height: 12px;
}

.node span, .node small {
    position: absolute;
    left: 49px;
    top: 0;
    font-size: 9px;
    color: #d2d2d2;
}

.node small {
    top: 15px;
    color: #6c97cf;
}

.n-top { top: -20px; }
.n1 { top: 15px; }
.n2 { top: 45px; }
.n3 { top: 78px; }
.n4 { top: 109px; }
.n5 { top: 149px; }
.n6 { top: 249px; }
.n7 { top: 288px; }

.error > i {
    background: linear-gradient(100deg, transparent 23%, #900000 25%, transparent 28%, transparent 70%, #900000 72%, transparent 75%), #ee0606;
}

.current > i {
    background: linear-gradient(90deg, transparent 86%, #36c4f5 87%), linear-gradient(100deg, transparent 10%, #777777 12%, transparent 15%, transparent 23%, #777777 25%, transparent 28%, transparent 70%, #777777 72%, transparent 75%), #ffffff;
}

.tooltip {
    position: absolute;
    left: 254px;
    top: 293px;
    padding: 1px;
    border: 1px solid #161616;
    background: #000000;
    color: #d0d0d0;
    white-space: nowrap;
}

.hint {
    position: absolute;
    left: 254px;
    bottom: 5px;
    font-size: 14px;
    line-height: 20px;
}

/* Playbar */
.playbar {
    height: 65px;
    flex: none;
    display: flex;
    background: #2d2d2d;
    border-top: 1px solid #111111;
}

.grip.foot {
    display: flex;
    align-items: flex-end;
    width: 10px;
}

.play-main {
    flex: 1;
    min-width: 0;
    display: flex;
    flex-direction: column;
    padding: 4px 0 0 3px;
    gap: 6px;
}

.play-row {
    display: flex;
    align-items: center;
    height: 27px;
}

.play-row.second {
    height: 23px;
}

.btns {
    display: flex;
    height: 100%;
    border: 1px solid #151515;
}

.btns button, .sq {
    position: relative;
    flex: 1;
    display: grid;
    place-items: center;
    background: linear-gradient(#4c4c4c, #3a3a3a);
    box-shadow: inset 1px 1px #5a5a5a, inset -1px -1px #222222;
}

.btns .on {
    background: #5f7da3;
}

.btns svg {
    width: 18px;
    height: 18px;
}

.transport {
    width: 128px;
}

.transport svg {
    width: 19px;
    height: 19px;
}

.steps {
    width: 26px;
    margin-right: 4px;
}

.steps svg {
    width: 8px;
    height: 14px;
}

.options {
    width: 153px;
}

.keys {
    width: 44px;
    margin: 0 6px 0 3px;
}

.keys svg {
    width: 12px;
    height: 12px;
}

.frame {
    width: 44px;
    height: 25px;
    margin: 0 1px 0 2px;
    padding: 0 2px;
    background: #101010;
    font-family: "DejaVu Sans Mono", monospace;
    font-size: 11px;
}

.timeline {
    position: relative;
    flex: 1;
    height: 100%;
    margin-right: 6px;
}

#ticks {
    width: 100%;
    height: 27px;
    overflow: visible;
}

#ticks line {
    stroke: #7c7c7c;
}

#ticks .track {
    stroke: #909090;
    stroke-width: 2;
}

#frames span {
    position: absolute;
    top: -7px;
    font-size: 9px;
    color: #a0a0a0;
}

#frames .now {
    top: -4px;
    padding: 0 2px;
    margin-left: -13px;
    border: 1px solid #d6d6d6;
    background: #050505;
    color: #ffffff;
    font-size: 11px;
}

#frames .now::after {
    content: "";
    position: absolute;
    left: 8px;
    top: 14px;
    border: 4px solid transparent;
    border-top-color: #ffffff;
    border-bottom: none;
}

.num-field {
    width: 39px;
    height: 21px;
    margin-right: 2px;
    padding: 0 2px;
    background: #141414;
    font-family: "DejaVu Sans Mono", monospace;
    font-size: 11px;
}

.num-field.flat {
    background: #242424;
}

.num-field:last-child {
    margin-right: 0;
}

.range {
    position: relative;
    flex: 1;
    height: 3px;
    background: #717171;
}

.range::before, .range::after {
    content: "";
    position: absolute;
    top: -4px;
    border: 5px solid transparent;
}

.range::before {
    left: -1px;
    border-left-color: #aaaaaa;
    border-right: none;
}

.range::after {
    right: 1px;
    border-right-color: #aaaaaa;
    border-left: none;
}

.key-set {
    width: 58px;
    display: flex;
    align-items: center;
    padding: 0 0 3px 2px;
}

.key-round {
    width: 38px;
    height: 38px;
    border: 1px solid #242424;
    border-radius: 50%;
    background: #323232;
    display: grid;
    place-items: center;
}

.key-round svg {
    width: 18px;
    height: 18px;
}

.key-drop {
    width: 14px;
    height: 20px;
    background: #393939;
    border: 1px solid #202020;
    color: #888888;
    font-size: 7px;
}

.channels {
    display: grid;
    grid-template: 24px 24px / 24px 145px;
    gap: 2px 3px;
    padding: 4px 3px 0 0;
}

.sq svg {
    width: 18px;
    height: 18px;
}

.wide-btn {
    display: flex;
    align-items: center;
    justify-content: space-between;
    padding: 0 5px 0 17px;
    background: linear-gradient(#505050, #3b3b3b);
    border: 1px solid #1e1e1e;
}

.wide-btn span {
    color: #777777;
    font-size: 8px;
}

.key-all {
    padding-left: 13px;
    height: 21px;
    align-self: center;
}

/* Status line */
.status {
    height: 26px;
    flex: none;
    display: flex;
    align-items: center;
    padding: 0 0 4px 2px;
    background: #191919;
    border-top: 1px solid #111111;
    box-shadow: inset 0 -2px #3a3a3a;
}

.cook {
    display: flex;
    align-items: center;
    width: 152px;
    height: 22px;
    background: #333333;
}

.cook .tool {
    width: 24px;
}

.cook .combo {
    flex: 1;
    height: 22px;
    padding-left: 15px;
}
```
FILE: script.js
```js
const SVG_NS = "http://www.w3.org/2000/svg";

function add(parent, tag, attrs) {
    const el = document.createElementNS(SVG_NS, tag);
    for (const key in attrs) {
        el.setAttribute(key, attrs[key]);
    }
    parent.appendChild(el);
    return el;
}

// Projects the reference plane: screen corners of the area x 10..-10, z -25..5
const corners = [[282, 213], [848, 171], [1222, 839], [247, 968]];

function makeProjection(c) {
    const [p0, p1, p2, p3] = c;
    const dx1 = p1[0] - p2[0], dx2 = p3[0] - p2[0], dx3 = p0[0] - p1[0] + p2[0] - p3[0];
    const dy1 = p1[1] - p2[1], dy2 = p3[1] - p2[1], dy3 = p0[1] - p1[1] + p2[1] - p3[1];
    const det = dx1 * dy2 - dx2 * dy1;
    const g = (dx3 * dy2 - dx2 * dy3) / det;
    const h = (dx1 * dy3 - dx3 * dy1) / det;
    const a = p1[0] - p0[0] + g * p1[0], b = p3[0] - p0[0] + h * p3[0];
    const d = p1[1] - p0[1] + g * p1[1], e = p3[1] - p0[1] + h * p3[1];
    return function (x, z) {
        const s = (10 - x) / 20;
        const t = (z + 25) / 30;
        const w = g * s + h * t + 1;
        return [(a * s + b * t + p0[0]) / w, (d * s + e * t + p0[1]) / w];
    };
}

const project = makeProjection(corners);
const floor = document.getElementById("floor");

function floorLine(a, b, major) {
    add(floor, "line", { x1: a[0], y1: a[1], x2: b[0], y2: b[1], class: major ? "major" : "minor" });
}

for (let i = -30; i <= 25; i++) {
    floorLine(project(i, -32), project(i, 20), i % 5 === 0);
}
for (let i = -32; i <= 20; i++) {
    floorLine(project(25, i), project(-30, i), i % 5 === 0);
}

// Staircase wireframe
const stairs = document.getElementById("stairs");

function draw(d, cls) {
    add(stairs, "path", { d: d, class: cls });
}

function mix(a, b, t) {
    return [a[0] + (b[0] - a[0]) * t, a[1] + (b[1] - a[1]) * t];
}

// n lines joining edge a-b to edge c-d
function hatch(a, b, c, d, n) {
    let path = "";
    for (let i = 0; i <= n; i++) {
        path += "M" + mix(a, b, i / n) + "L" + mix(c, d, i / n);
    }
    draw(path, "stair-fine");
    draw("M" + a + "L" + b + "L" + d + "L" + c + "Z", "stair-fine");
}

// upper landing
draw("M148 155L533 73L700 180L780 205M148 155L265 357L450 312M158 152L535 82M150 160L268 350", "stair-line");
draw("M160 162L515 90M180 160L275 343L450 303M155 158V232L500 158V88M155 232L265 420V357M515 90V158M533 73V225M520 90L530 225M500 158L530 200", "stair-fine");
draw("M533 90L760 210M520 150L545 130L720 200M545 195L800 240", "stair-fine");

// treads, from the top step to the bottom one
const treads = [
    [455, 275, 460, 520], [335, 400, 440, 575], [345, 395, 430, 515], [225, 440, 410, 585],
    [235, 500, 415, 640], [150, 560, 410, 655], [155, 615, 400, 710], [105, 688, 388, 728],
    [115, 745, 385, 785], [100, 830, 385, 800], [110, 882, 390, 850], [145, 963, 390, 870],
    [150, 1015, 390, 920], [220, 1090, 410, 935], [220, 1130, 400, 982], [325, 1185, 427, 992],
    [330, 1235, 418, 1045], [438, 1255, 447, 1042]
];
treads.forEach(function (t, index) {
    const [x1, y1, x2, y2] = t;
    draw(`M${x1} ${y1}L${x2} ${y2}`, "stair-line");
    draw(`M${x1 + 6} ${y1 + 8}L${x2} ${y2 + 6}M${x1 + 12} ${y1 + 2}L${x2 + 4} ${y2 - 8}M${x2} ${y2}v45h12v-55`, "stair-fine");
    const next = treads[index + 1];
    if (next && index % 2 === 1) {
        draw(`M${x1} ${y1}L${next[2]} ${next[3]}M${x1} ${y1}L${next[0]} ${next[1]}`, "stair-fine");
    }
});

// outer stringer panels
hatch([450, 275], [540, 280], [450, 335], [540, 335], 9);
hatch([335, 350], [450, 335], [335, 405], [450, 395], 12);
hatch([250, 428], [335, 405], [240, 492], [335, 460], 9);
hatch([155, 550], [232, 505], [155, 605], [232, 552], 12);
hatch([105, 690], [155, 615], [105, 720], [155, 665], 8);
hatch([100, 760], [115, 745], [98, 830], [112, 820], 3);
hatch([105, 880], [145, 960], [110, 930], [145, 1020], 10);
hatch([145, 1025], [218, 1090], [148, 1072], [218, 1137], 9);
hatch([218, 1140], [325, 1190], [218, 1187], [325, 1238], 12);
hatch([325, 1238], [440, 1258], [325, 1288], [440, 1306], 13);
hatch([442, 1300], [565, 1290], [442, 1352], [565, 1336], 14);
draw("M104 685L97 760L102 860L112 930L145 1020L220 1138L325 1185L440 1255M98 790L105 900L140 970", "stair-line");
draw("M385 710V980M393 715V980M405 640V700M410 575V640M433 1040V1250M440 1080V1300M450 1040V1255M457 1090V1270", "stair-fine");

// lower landing
draw("M450 1092L743 1017L853 1210L560 1290L442 1305M460 1086L740 1022M743 1020L848 1205", "stair-line");
draw("M475 1096L730 1032L835 1205L555 1280M465 1138L740 1068L848 1260V1210M740 1068V1017M848 1260L565 1335M465 1138L565 1335M465 1090L565 1285M465 1090V1138M740 1032L825 1210M440 1080V1100", "stair-fine");

// collapsed steps at the top end
draw("M640 235L700 195L790 205L875 222L868 295L825 378L815 310L760 290L690 300L620 290Z", "stair-fill");
hatch([545, 130], [780, 205], [530, 340], [860, 300], 12);
hatch([540, 200], [870, 225], [490, 450], [860, 290], 11);
hatch([540, 235], [540, 335], [870, 215], [840, 330], 9);
hatch([740, 290], [830, 300], [740, 370], [820, 378], 9);
hatch([570, 300], [740, 290], [590, 345], [740, 320], 18);
draw("M875 222L825 378M860 215V362L745 375L690 345L530 420L515 465L485 520M875 222L868 300M545 235V335M455 275V520M468 340V460L515 470L700 330M515 345L480 400L530 395M560 190L860 210M550 260L870 240", "stair-line");
draw("M480 460L520 400L640 360L850 350M485 520V460M500 450L560 350L700 300M490 440L530 380L680 310", "stair-fine");

// guide curve
draw("M575 268L520 285L390 345L280 420L200 520L150 600L118 680L105 770L105 860L120 930L145 990L180 1055L250 1150L330 1210L400 1260L490 1297M330 350L450 322L700 265L790 278L850 275M670 248L750 238L840 248", "stair-curve");

// Timeline ticks
const FIRST = 1;
const LAST = 240;
const ticks = document.getElementById("ticks");
const frames = document.getElementById("frames");

function frameLeft(frame) {
    return (frame - FIRST) / (LAST - FIRST) * 100 + "%";
}

function frameLabel(frame, cls) {
    const span = document.createElement("span");
    span.textContent = frame;
    span.className = cls || "";
    span.style.left = frameLeft(frame);
    frames.appendChild(span);
}

add(ticks, "line", { x1: 0, x2: "100%", y1: 14, y2: 14, class: "track" });
for (let f = FIRST; f <= LAST; f++) {
    const big = f % 24 === 0;
    add(ticks, "line", { x1: frameLeft(f), x2: frameLeft(f), y1: big ? 8 : 11, y2: big ? 21 : 18 });
    if ((big && f < LAST) || f === FIRST) {
        frameLabel(f);
    }
}
frameLabel(239, "now");
```
